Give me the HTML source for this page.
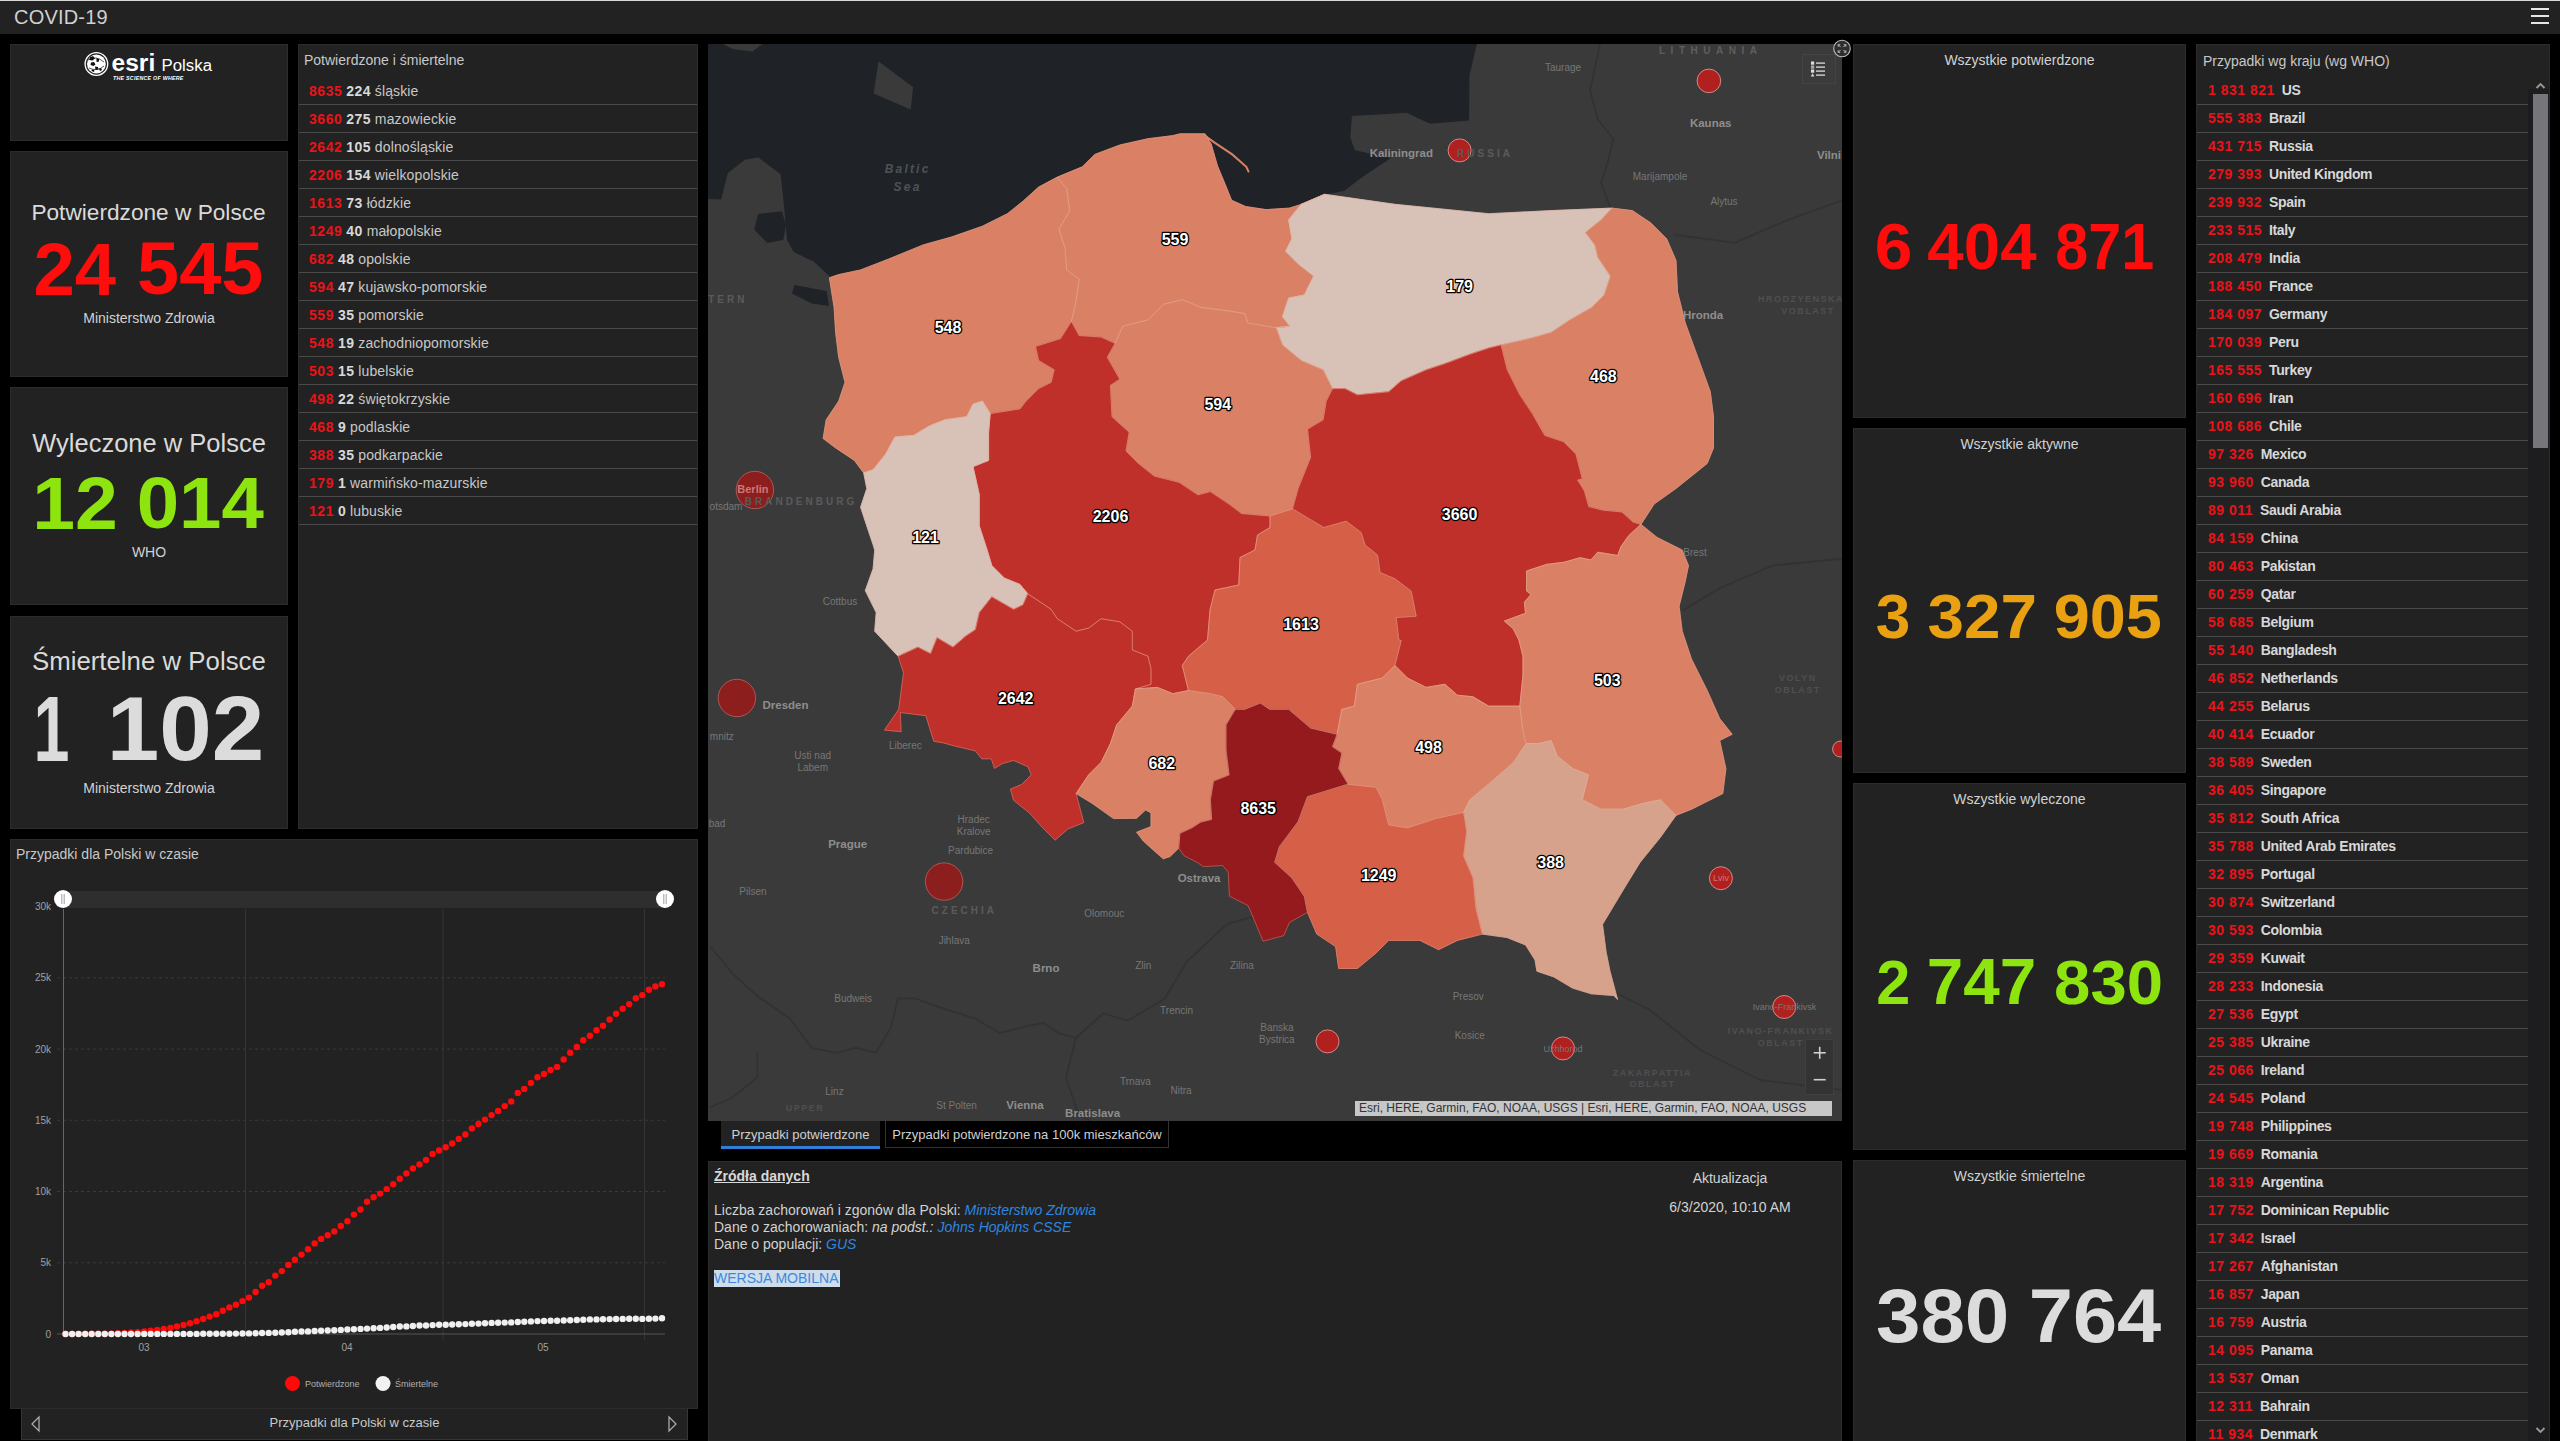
<!DOCTYPE html><html><head><meta charset="utf-8"><title>COVID-19</title><style>
*{margin:0;padding:0;box-sizing:border-box}
html,body{width:2560px;height:1441px;overflow:hidden;background:#000;font-family:"Liberation Sans", sans-serif;color:#c8c8c8}
.abs{position:absolute}
.panel{position:absolute;background:#222;border:1px solid #2c2c2c}
.t{position:absolute;white-space:nowrap;line-height:1}
.row{position:absolute;left:1px;height:28px;border-bottom:1px solid #4a4a4a;white-space:nowrap;font-size:14px;line-height:1}
.row span.n{color:#e8141a;font-weight:bold;letter-spacing:0.55px}
.row span.c{color:#e8141a;font-weight:bold;letter-spacing:0.5px}
.row span.cn{color:#d8d8d8;font-weight:bold;letter-spacing:-0.35px;margin-left:3px}
.row span.nm{letter-spacing:0.12px}
.row span.d{color:#d8d8d8;font-weight:bold;letter-spacing:0.45px}
</style></head><body>
<div class="abs" style="left:0;top:0;width:2560px;height:1px;background:#d8d8d8"></div>
<div class="abs" style="left:0;top:1px;width:2560px;height:33px;background:#222"></div>
<div class="t" style="left:14px;top:7px;font-size:20px;color:#d0d0d0;letter-spacing:0.2px">COVID-19</div>
<div class="abs" style="left:2531px;top:8px;width:18px;height:2px;background:#e6e6e6"></div>
<div class="abs" style="left:2531px;top:15px;width:18px;height:2px;background:#e6e6e6"></div>
<div class="abs" style="left:2531px;top:22px;width:18px;height:2px;background:#e6e6e6"></div>
<div class="panel" style="left:10px;top:44px;width:278px;height:97px"></div>
<svg class="abs" style="left:0;top:0" width="260" height="100" viewBox="0 0 260 100">
<circle cx="96.4" cy="64" r="11.3" fill="none" stroke="#fff" stroke-width="1.3"/>
<circle cx="96.4" cy="64" r="9.4" fill="#fff"/>
<g fill="#111">
<path d="M89.5 57.5 l3.5 -1.5 l2 2.5 l-2.5 2 l-3 -0.5 z"/>
<path d="M91 62.5 l3 -0.5 l1.5 2.5 l-2 1.5 l-3 -1 z"/>
<path d="M96.5 58 l2.5 1 l0 2.5 l-2.5 0.5 z"/>
<path d="M95 66.5 l3 0.5 l0.5 2.5 l-3 0.5 z"/>
<path d="M92 69.5 l2.5 0.5 l-0.5 2 l-2.5 -1 z"/>
<path d="M100 68 l2 1 l-1 2 l-2 -1 z"/>
</g>
<g stroke="#111" stroke-width="0.7" fill="none"><path d="M88 60 Q96 55 104 62"/><path d="M89 68 Q97 72 104 66"/></g>
</svg>
<div class="abs" style="left:0;top:0;transform-origin:0 0;transform:matrix(0.2455,0,0,0.2319,111.52,51.09);font-size:100px;line-height:1;font-weight:bold;color:#fff;white-space:nowrap">esri</div>
<div class="abs" style="left:0;top:0;transform-origin:0 0;transform:matrix(0.1682,0,0,0.1710,161.55,56.26);font-size:100px;line-height:1;font-weight:normal;color:#fff;white-space:nowrap">Polska</div>
<div class="abs" style="left:113px;top:75px;width:67px;height:6px;font-size:5.3px;line-height:6px;font-weight:bold;font-style:italic;color:#fff;white-space:nowrap;letter-spacing:0.25px">THE SCIENCE OF WHERE</div>
<div class="panel" style="left:10px;top:151px;width:278px;height:226px"></div>
<div class="abs" style="left:0;top:0;transform-origin:0 0;transform:matrix(0.2266,0,0,0.2290,31.39,200.54);font-size:100px;line-height:1;font-weight:normal;color:#dadada;white-space:nowrap">Potwierdzone w Polsce</div>
<div class="abs" style="left:0;top:0;transform-origin:0 0;transform:matrix(0.7435,0,0,0.7471,33.47,231.49);font-size:100px;line-height:1;font-weight:bold;color:#ff0d0d;white-space:nowrap">24</div>
<div class="abs" style="left:0;top:0;transform-origin:0 0;transform:matrix(0.7571,0,0,0.7471,137.03,230.75);font-size:100px;line-height:1;font-weight:bold;color:#ff0d0d;white-space:nowrap">545</div>
<div class="t" style="left:10px;width:278px;text-align:center;top:311px;font-size:14px;color:#d2d2d2">Ministerstwo Zdrowia</div>
<div class="panel" style="left:10px;top:387px;width:278px;height:218px"></div>
<div class="abs" style="left:0;top:0;transform-origin:0 0;transform:matrix(0.2550,0,0,0.2507,32.20,431.19);font-size:100px;line-height:1;font-weight:normal;color:#dadada;white-space:nowrap">Wyleczone w Polsce</div>
<div class="abs" style="left:0;top:0;transform-origin:0 0;transform:matrix(0.7693,0,0,0.7329,32.18,466.21);font-size:100px;line-height:1;font-weight:bold;color:#8de40e;white-space:nowrap">12</div>
<div class="abs" style="left:0;top:0;transform-origin:0 0;transform:matrix(0.7617,0,0,0.7225,136.75,466.36);font-size:100px;line-height:1;font-weight:bold;color:#8de40e;white-space:nowrap">014</div>
<div class="t" style="left:10px;width:278px;text-align:center;top:545px;font-size:14px;color:#d2d2d2">WHO</div>
<div class="panel" style="left:10px;top:616px;width:278px;height:213px"></div>
<div class="abs" style="left:0;top:0;transform-origin:0 0;transform:matrix(0.2582,0,0,0.2565,31.91,647.90);font-size:100px;line-height:1;font-weight:normal;color:#dadada;white-space:nowrap">Śmiertelne w Polsce</div>
<div class="abs" style="left:0;top:0;transform-origin:0 0;transform:matrix(0.6468,0,0,0.9341,33.42,681.86);font-size:100px;line-height:1;font-weight:bold;color:#dcdcdc;white-space:nowrap">1</div>
<div class="abs" style="left:0;top:0;transform-origin:0 0;transform:matrix(0.9446,0,0,0.9077,106.73,683.18);font-size:100px;line-height:1;font-weight:bold;color:#dcdcdc;white-space:nowrap">102</div>
<div class="t" style="left:10px;width:278px;text-align:center;top:781px;font-size:14px;color:#d2d2d2">Ministerstwo Zdrowia</div>
<div class="panel" style="left:298px;top:44px;width:400px;height:785px"></div>
<div class="t" style="left:304px;top:53px;font-size:14px;color:#c8c8c8">Potwierdzone i śmiertelne</div>
<div class="row" style="left:299px;top:77px;width:398px"><div class="t" style="left:10px;top:7px"><span class="n">8635</span> <span class="d">224</span> <span class="nm">śląskie</span></div></div>
<div class="row" style="left:299px;top:105px;width:398px"><div class="t" style="left:10px;top:7px"><span class="n">3660</span> <span class="d">275</span> <span class="nm">mazowieckie</span></div></div>
<div class="row" style="left:299px;top:133px;width:398px"><div class="t" style="left:10px;top:7px"><span class="n">2642</span> <span class="d">105</span> <span class="nm">dolnośląskie</span></div></div>
<div class="row" style="left:299px;top:161px;width:398px"><div class="t" style="left:10px;top:7px"><span class="n">2206</span> <span class="d">154</span> <span class="nm">wielkopolskie</span></div></div>
<div class="row" style="left:299px;top:189px;width:398px"><div class="t" style="left:10px;top:7px"><span class="n">1613</span> <span class="d">73</span> <span class="nm">łódzkie</span></div></div>
<div class="row" style="left:299px;top:217px;width:398px"><div class="t" style="left:10px;top:7px"><span class="n">1249</span> <span class="d">40</span> <span class="nm">małopolskie</span></div></div>
<div class="row" style="left:299px;top:245px;width:398px"><div class="t" style="left:10px;top:7px"><span class="n">682</span> <span class="d">48</span> <span class="nm">opolskie</span></div></div>
<div class="row" style="left:299px;top:273px;width:398px"><div class="t" style="left:10px;top:7px"><span class="n">594</span> <span class="d">47</span> <span class="nm">kujawsko-pomorskie</span></div></div>
<div class="row" style="left:299px;top:301px;width:398px"><div class="t" style="left:10px;top:7px"><span class="n">559</span> <span class="d">35</span> <span class="nm">pomorskie</span></div></div>
<div class="row" style="left:299px;top:329px;width:398px"><div class="t" style="left:10px;top:7px"><span class="n">548</span> <span class="d">19</span> <span class="nm">zachodniopomorskie</span></div></div>
<div class="row" style="left:299px;top:357px;width:398px"><div class="t" style="left:10px;top:7px"><span class="n">503</span> <span class="d">15</span> <span class="nm">lubelskie</span></div></div>
<div class="row" style="left:299px;top:385px;width:398px"><div class="t" style="left:10px;top:7px"><span class="n">498</span> <span class="d">22</span> <span class="nm">świętokrzyskie</span></div></div>
<div class="row" style="left:299px;top:413px;width:398px"><div class="t" style="left:10px;top:7px"><span class="n">468</span> <span class="d">9</span> <span class="nm">podlaskie</span></div></div>
<div class="row" style="left:299px;top:441px;width:398px"><div class="t" style="left:10px;top:7px"><span class="n">388</span> <span class="d">35</span> <span class="nm">podkarpackie</span></div></div>
<div class="row" style="left:299px;top:469px;width:398px"><div class="t" style="left:10px;top:7px"><span class="n">179</span> <span class="d">1</span> <span class="nm">warmińsko-mazurskie</span></div></div>
<div class="row" style="left:299px;top:497px;width:398px"><div class="t" style="left:10px;top:7px"><span class="n">121</span> <span class="d">0</span> <span class="nm">lubuskie</span></div></div>
<div class="panel" style="left:1853px;top:44px;width:333px;height:374px"></div>
<div class="t" style="left:1853px;width:333px;text-align:center;top:53px;font-size:14px;color:#d2d2d2">Wszystkie potwierdzone</div>
<div class="abs" style="left:0;top:0;transform-origin:0 0;transform:matrix(0.6771,0,0,0.6430,1874.79,214.11);font-size:100px;line-height:1;font-weight:bold;color:#ff0d0d;white-space:nowrap">6</div>
<div class="abs" style="left:0;top:0;transform-origin:0 0;transform:matrix(0.6545,0,0,0.6430,1927.35,214.11);font-size:100px;line-height:1;font-weight:bold;color:#ff0d0d;white-space:nowrap">404</div>
<div class="abs" style="left:0;top:0;transform-origin:0 0;transform:matrix(0.5932,0,0,0.6430,2055.22,214.11);font-size:100px;line-height:1;font-weight:bold;color:#ff0d0d;white-space:nowrap">871</div>
<div class="panel" style="left:1853px;top:428px;width:333px;height:345px"></div>
<div class="t" style="left:1853px;width:333px;text-align:center;top:437px;font-size:14px;color:#d2d2d2">Wszystkie aktywne</div>
<div class="abs" style="left:0;top:0;transform-origin:0 0;transform:matrix(0.6220,0,0,0.6338,1875.66,584.24);font-size:100px;line-height:1;font-weight:bold;color:#e9a112;white-space:nowrap">3</div>
<div class="abs" style="left:0;top:0;transform-origin:0 0;transform:matrix(0.6562,0,0,0.6338,1927.44,584.24);font-size:100px;line-height:1;font-weight:bold;color:#e9a112;white-space:nowrap">327</div>
<div class="abs" style="left:0;top:0;transform-origin:0 0;transform:matrix(0.6484,0,0,0.6338,2053.65,584.24);font-size:100px;line-height:1;font-weight:bold;color:#e9a112;white-space:nowrap">905</div>
<div class="panel" style="left:1853px;top:783px;width:333px;height:367px"></div>
<div class="t" style="left:1853px;width:333px;text-align:center;top:792px;font-size:14px;color:#d2d2d2">Wszystkie wyleczone</div>
<div class="abs" style="left:0;top:0;transform-origin:0 0;transform:matrix(0.6122,0,0,0.6343,1876.16,950.49);font-size:100px;line-height:1;font-weight:bold;color:#8de40e;white-space:nowrap">2</div>
<div class="abs" style="left:0;top:0;transform-origin:0 0;transform:matrix(0.6563,0,0,0.6435,1926.77,949.70);font-size:100px;line-height:1;font-weight:bold;color:#8de40e;white-space:nowrap">747</div>
<div class="abs" style="left:0;top:0;transform-origin:0 0;transform:matrix(0.6537,0,0,0.6254,2054.04,950.62);font-size:100px;line-height:1;font-weight:bold;color:#8de40e;white-space:nowrap">830</div>
<div class="panel" style="left:1853px;top:1160px;width:333px;height:290px"></div>
<div class="t" style="left:1853px;width:333px;text-align:center;top:1169px;font-size:14px;color:#d2d2d2">Wszystkie śmiertelne</div>
<div class="abs" style="left:0;top:0;transform-origin:0 0;transform:matrix(0.7997,0,0,0.7655,1875.90,1277.27);font-size:100px;line-height:1;font-weight:bold;color:#dcdcdc;white-space:nowrap">380</div>
<div class="abs" style="left:0;top:0;transform-origin:0 0;transform:matrix(0.7944,0,0,0.7655,2028.72,1277.27);font-size:100px;line-height:1;font-weight:bold;color:#dcdcdc;white-space:nowrap">764</div>
<div class="panel" style="left:2196px;top:44px;width:354px;height:1400px;overflow:hidden">
<div class="t" style="left:6px;top:9px;font-size:14px;color:#c8c8c8">Przypadki wg kraju (wg WHO)</div>
<div class="row" style="left:0;top:32px;width:336px"><div class="t" style="left:11px;top:6px"><span class="c">1 831 821</span> <span class="cn">US</span></div></div>
<div class="row" style="left:0;top:60px;width:336px"><div class="t" style="left:11px;top:6px"><span class="c">555 383</span> <span class="cn">Brazil</span></div></div>
<div class="row" style="left:0;top:88px;width:336px"><div class="t" style="left:11px;top:6px"><span class="c">431 715</span> <span class="cn">Russia</span></div></div>
<div class="row" style="left:0;top:116px;width:336px"><div class="t" style="left:11px;top:6px"><span class="c">279 393</span> <span class="cn">United Kingdom</span></div></div>
<div class="row" style="left:0;top:144px;width:336px"><div class="t" style="left:11px;top:6px"><span class="c">239 932</span> <span class="cn">Spain</span></div></div>
<div class="row" style="left:0;top:172px;width:336px"><div class="t" style="left:11px;top:6px"><span class="c">233 515</span> <span class="cn">Italy</span></div></div>
<div class="row" style="left:0;top:200px;width:336px"><div class="t" style="left:11px;top:6px"><span class="c">208 479</span> <span class="cn">India</span></div></div>
<div class="row" style="left:0;top:228px;width:336px"><div class="t" style="left:11px;top:6px"><span class="c">188 450</span> <span class="cn">France</span></div></div>
<div class="row" style="left:0;top:256px;width:336px"><div class="t" style="left:11px;top:6px"><span class="c">184 097</span> <span class="cn">Germany</span></div></div>
<div class="row" style="left:0;top:284px;width:336px"><div class="t" style="left:11px;top:6px"><span class="c">170 039</span> <span class="cn">Peru</span></div></div>
<div class="row" style="left:0;top:312px;width:336px"><div class="t" style="left:11px;top:6px"><span class="c">165 555</span> <span class="cn">Turkey</span></div></div>
<div class="row" style="left:0;top:340px;width:336px"><div class="t" style="left:11px;top:6px"><span class="c">160 696</span> <span class="cn">Iran</span></div></div>
<div class="row" style="left:0;top:368px;width:336px"><div class="t" style="left:11px;top:6px"><span class="c">108 686</span> <span class="cn">Chile</span></div></div>
<div class="row" style="left:0;top:396px;width:336px"><div class="t" style="left:11px;top:6px"><span class="c">97 326</span> <span class="cn">Mexico</span></div></div>
<div class="row" style="left:0;top:424px;width:336px"><div class="t" style="left:11px;top:6px"><span class="c">93 960</span> <span class="cn">Canada</span></div></div>
<div class="row" style="left:0;top:452px;width:336px"><div class="t" style="left:11px;top:6px"><span class="c">89 011</span> <span class="cn">Saudi Arabia</span></div></div>
<div class="row" style="left:0;top:480px;width:336px"><div class="t" style="left:11px;top:6px"><span class="c">84 159</span> <span class="cn">China</span></div></div>
<div class="row" style="left:0;top:508px;width:336px"><div class="t" style="left:11px;top:6px"><span class="c">80 463</span> <span class="cn">Pakistan</span></div></div>
<div class="row" style="left:0;top:536px;width:336px"><div class="t" style="left:11px;top:6px"><span class="c">60 259</span> <span class="cn">Qatar</span></div></div>
<div class="row" style="left:0;top:564px;width:336px"><div class="t" style="left:11px;top:6px"><span class="c">58 685</span> <span class="cn">Belgium</span></div></div>
<div class="row" style="left:0;top:592px;width:336px"><div class="t" style="left:11px;top:6px"><span class="c">55 140</span> <span class="cn">Bangladesh</span></div></div>
<div class="row" style="left:0;top:620px;width:336px"><div class="t" style="left:11px;top:6px"><span class="c">46 852</span> <span class="cn">Netherlands</span></div></div>
<div class="row" style="left:0;top:648px;width:336px"><div class="t" style="left:11px;top:6px"><span class="c">44 255</span> <span class="cn">Belarus</span></div></div>
<div class="row" style="left:0;top:676px;width:336px"><div class="t" style="left:11px;top:6px"><span class="c">40 414</span> <span class="cn">Ecuador</span></div></div>
<div class="row" style="left:0;top:704px;width:336px"><div class="t" style="left:11px;top:6px"><span class="c">38 589</span> <span class="cn">Sweden</span></div></div>
<div class="row" style="left:0;top:732px;width:336px"><div class="t" style="left:11px;top:6px"><span class="c">36 405</span> <span class="cn">Singapore</span></div></div>
<div class="row" style="left:0;top:760px;width:336px"><div class="t" style="left:11px;top:6px"><span class="c">35 812</span> <span class="cn">South Africa</span></div></div>
<div class="row" style="left:0;top:788px;width:336px"><div class="t" style="left:11px;top:6px"><span class="c">35 788</span> <span class="cn">United Arab Emirates</span></div></div>
<div class="row" style="left:0;top:816px;width:336px"><div class="t" style="left:11px;top:6px"><span class="c">32 895</span> <span class="cn">Portugal</span></div></div>
<div class="row" style="left:0;top:844px;width:336px"><div class="t" style="left:11px;top:6px"><span class="c">30 874</span> <span class="cn">Switzerland</span></div></div>
<div class="row" style="left:0;top:872px;width:336px"><div class="t" style="left:11px;top:6px"><span class="c">30 593</span> <span class="cn">Colombia</span></div></div>
<div class="row" style="left:0;top:900px;width:336px"><div class="t" style="left:11px;top:6px"><span class="c">29 359</span> <span class="cn">Kuwait</span></div></div>
<div class="row" style="left:0;top:928px;width:336px"><div class="t" style="left:11px;top:6px"><span class="c">28 233</span> <span class="cn">Indonesia</span></div></div>
<div class="row" style="left:0;top:956px;width:336px"><div class="t" style="left:11px;top:6px"><span class="c">27 536</span> <span class="cn">Egypt</span></div></div>
<div class="row" style="left:0;top:984px;width:336px"><div class="t" style="left:11px;top:6px"><span class="c">25 385</span> <span class="cn">Ukraine</span></div></div>
<div class="row" style="left:0;top:1012px;width:336px"><div class="t" style="left:11px;top:6px"><span class="c">25 066</span> <span class="cn">Ireland</span></div></div>
<div class="row" style="left:0;top:1040px;width:336px"><div class="t" style="left:11px;top:6px"><span class="c">24 545</span> <span class="cn">Poland</span></div></div>
<div class="row" style="left:0;top:1068px;width:336px"><div class="t" style="left:11px;top:6px"><span class="c">19 748</span> <span class="cn">Philippines</span></div></div>
<div class="row" style="left:0;top:1096px;width:336px"><div class="t" style="left:11px;top:6px"><span class="c">19 669</span> <span class="cn">Romania</span></div></div>
<div class="row" style="left:0;top:1124px;width:336px"><div class="t" style="left:11px;top:6px"><span class="c">18 319</span> <span class="cn">Argentina</span></div></div>
<div class="row" style="left:0;top:1152px;width:336px"><div class="t" style="left:11px;top:6px"><span class="c">17 752</span> <span class="cn">Dominican Republic</span></div></div>
<div class="row" style="left:0;top:1180px;width:336px"><div class="t" style="left:11px;top:6px"><span class="c">17 342</span> <span class="cn">Israel</span></div></div>
<div class="row" style="left:0;top:1208px;width:336px"><div class="t" style="left:11px;top:6px"><span class="c">17 267</span> <span class="cn">Afghanistan</span></div></div>
<div class="row" style="left:0;top:1236px;width:336px"><div class="t" style="left:11px;top:6px"><span class="c">16 857</span> <span class="cn">Japan</span></div></div>
<div class="row" style="left:0;top:1264px;width:336px"><div class="t" style="left:11px;top:6px"><span class="c">16 759</span> <span class="cn">Austria</span></div></div>
<div class="row" style="left:0;top:1292px;width:336px"><div class="t" style="left:11px;top:6px"><span class="c">14 095</span> <span class="cn">Panama</span></div></div>
<div class="row" style="left:0;top:1320px;width:336px"><div class="t" style="left:11px;top:6px"><span class="c">13 537</span> <span class="cn">Oman</span></div></div>
<div class="row" style="left:0;top:1348px;width:336px"><div class="t" style="left:11px;top:6px"><span class="c">12 311</span> <span class="cn">Bahrain</span></div></div>
<div class="row" style="left:0;top:1376px;width:336px"><div class="t" style="left:11px;top:6px"><span class="c">11 934</span> <span class="cn">Denmark</span></div></div>
<div class="abs" style="left:331px;top:44px;width:21px;height:1400px;background:#1d1d1f"></div>
<div class="abs" style="left:336px;top:49px;width:15px;height:354px;background:#76767a"></div>
<svg class="abs" style="left:336px;top:36px" width="15" height="10"><path d="M3.5 7 L7.5 3 L11.5 7" fill="none" stroke="#9a9a9a" stroke-width="1.8"/></svg>
<svg class="abs" style="left:336px;top:1380px" width="15" height="10"><path d="M3.5 3 L7.5 7 L11.5 3" fill="none" stroke="#9a9a9a" stroke-width="1.8"/></svg>
</div>
<div class="panel" style="left:10px;top:839px;width:688px;height:570px"></div>
<div class="t" style="left:16px;top:847px;font-size:14px;color:#c8c8c8">Przypadki dla Polski w czasie</div>
<svg class="abs" style="left:0;top:0" width="720" height="1441" viewBox="0 0 720 1441"><line x1="245.5" y1="909" x2="245.5" y2="1340" stroke="#353535" stroke-width="1"/><line x1="443.0" y1="909" x2="443.0" y2="1340" stroke="#353535" stroke-width="1"/><line x1="644.5" y1="909" x2="644.5" y2="1340" stroke="#353535" stroke-width="1"/><line x1="57" y1="1262.8" x2="665" y2="1262.8" stroke="#3a3a3a" stroke-width="1" stroke-dasharray="3,3"/><text x="51" y="1266.3" text-anchor="end" font-family="Liberation Sans" font-size="10" fill="#a0a0a0">5k</text><line x1="57" y1="1191.5" x2="665" y2="1191.5" stroke="#3a3a3a" stroke-width="1" stroke-dasharray="3,3"/><text x="51" y="1195.0" text-anchor="end" font-family="Liberation Sans" font-size="10" fill="#a0a0a0">10k</text><line x1="57" y1="1120.3" x2="665" y2="1120.3" stroke="#3a3a3a" stroke-width="1" stroke-dasharray="3,3"/><text x="51" y="1123.8" text-anchor="end" font-family="Liberation Sans" font-size="10" fill="#a0a0a0">15k</text><line x1="57" y1="1049.1" x2="665" y2="1049.1" stroke="#3a3a3a" stroke-width="1" stroke-dasharray="3,3"/><text x="51" y="1052.6" text-anchor="end" font-family="Liberation Sans" font-size="10" fill="#a0a0a0">20k</text><line x1="57" y1="977.8" x2="665" y2="977.8" stroke="#3a3a3a" stroke-width="1" stroke-dasharray="3,3"/><text x="51" y="981.3" text-anchor="end" font-family="Liberation Sans" font-size="10" fill="#a0a0a0">25k</text><line x1="57" y1="906.6" x2="665" y2="906.6" stroke="#3a3a3a" stroke-width="1" stroke-dasharray="3,3"/><text x="51" y="910.1" text-anchor="end" font-family="Liberation Sans" font-size="10" fill="#a0a0a0">30k</text><text x="51" y="1337.5" text-anchor="end" font-family="Liberation Sans" font-size="10" fill="#a0a0a0">0</text><line x1="57" y1="1334.0" x2="665" y2="1334.0" stroke="#555" stroke-width="1"/><line x1="63.5" y1="909" x2="63.5" y2="1334.0" stroke="#666" stroke-width="1"/><text x="144" y="1351" text-anchor="middle" font-family="Liberation Sans" font-size="10" fill="#a0a0a0">03</text><text x="347" y="1351" text-anchor="middle" font-family="Liberation Sans" font-size="10" fill="#a0a0a0">04</text><text x="543" y="1351" text-anchor="middle" font-family="Liberation Sans" font-size="10" fill="#a0a0a0">05</text><rect x="63" y="891" width="602" height="17" fill="#2e2e2e"/><circle cx="63" cy="899" r="9" fill="#fff"/><line x1="61.8" y1="894" x2="61.8" y2="904" stroke="#888" stroke-width="0.8"/><line x1="64.2" y1="894" x2="64.2" y2="904" stroke="#888" stroke-width="0.8"/><circle cx="665" cy="899" r="9" fill="#fff"/><line x1="663.8" y1="894" x2="663.8" y2="904" stroke="#888" stroke-width="0.8"/><line x1="666.2" y1="894" x2="666.2" y2="904" stroke="#888" stroke-width="0.8"/><circle cx="65.5" cy="1334.0" r="3.2" fill="#ff0a0a"/><circle cx="72.1" cy="1334.0" r="3.2" fill="#ff0a0a"/><circle cx="78.6" cy="1333.9" r="3.2" fill="#ff0a0a"/><circle cx="85.2" cy="1333.9" r="3.2" fill="#ff0a0a"/><circle cx="91.7" cy="1333.8" r="3.2" fill="#ff0a0a"/><circle cx="98.3" cy="1333.8" r="3.2" fill="#ff0a0a"/><circle cx="104.8" cy="1333.7" r="3.2" fill="#ff0a0a"/><circle cx="111.4" cy="1333.6" r="3.2" fill="#ff0a0a"/><circle cx="117.9" cy="1333.3" r="3.2" fill="#ff0a0a"/><circle cx="124.5" cy="1333.0" r="3.2" fill="#ff0a0a"/><circle cx="131.0" cy="1332.5" r="3.2" fill="#ff0a0a"/><circle cx="137.6" cy="1332.2" r="3.2" fill="#ff0a0a"/><circle cx="144.2" cy="1331.5" r="3.2" fill="#ff0a0a"/><circle cx="150.7" cy="1330.6" r="3.2" fill="#ff0a0a"/><circle cx="157.3" cy="1329.9" r="3.2" fill="#ff0a0a"/><circle cx="163.8" cy="1328.9" r="3.2" fill="#ff0a0a"/><circle cx="170.4" cy="1327.9" r="3.2" fill="#ff0a0a"/><circle cx="176.9" cy="1326.4" r="3.2" fill="#ff0a0a"/><circle cx="183.5" cy="1325.0" r="3.2" fill="#ff0a0a"/><circle cx="190.0" cy="1323.3" r="3.2" fill="#ff0a0a"/><circle cx="196.6" cy="1321.2" r="3.2" fill="#ff0a0a"/><circle cx="203.2" cy="1319.0" r="3.2" fill="#ff0a0a"/><circle cx="209.7" cy="1316.6" r="3.2" fill="#ff0a0a"/><circle cx="216.3" cy="1314.2" r="3.2" fill="#ff0a0a"/><circle cx="222.8" cy="1310.7" r="3.2" fill="#ff0a0a"/><circle cx="229.4" cy="1307.5" r="3.2" fill="#ff0a0a"/><circle cx="235.9" cy="1304.7" r="3.2" fill="#ff0a0a"/><circle cx="242.5" cy="1301.1" r="3.2" fill="#ff0a0a"/><circle cx="249.0" cy="1297.6" r="3.2" fill="#ff0a0a"/><circle cx="255.6" cy="1292.0" r="3.2" fill="#ff0a0a"/><circle cx="262.1" cy="1285.8" r="3.2" fill="#ff0a0a"/><circle cx="268.7" cy="1282.3" r="3.2" fill="#ff0a0a"/><circle cx="275.3" cy="1275.6" r="3.2" fill="#ff0a0a"/><circle cx="281.8" cy="1271.1" r="3.2" fill="#ff0a0a"/><circle cx="288.4" cy="1264.9" r="3.2" fill="#ff0a0a"/><circle cx="294.9" cy="1259.8" r="3.2" fill="#ff0a0a"/><circle cx="301.5" cy="1254.6" r="3.2" fill="#ff0a0a"/><circle cx="308.0" cy="1249.2" r="3.2" fill="#ff0a0a"/><circle cx="314.6" cy="1243.4" r="3.2" fill="#ff0a0a"/><circle cx="321.1" cy="1238.9" r="3.2" fill="#ff0a0a"/><circle cx="327.7" cy="1235.2" r="3.2" fill="#ff0a0a"/><circle cx="334.3" cy="1231.4" r="3.2" fill="#ff0a0a"/><circle cx="340.8" cy="1226.0" r="3.2" fill="#ff0a0a"/><circle cx="347.4" cy="1221.2" r="3.2" fill="#ff0a0a"/><circle cx="353.9" cy="1214.6" r="3.2" fill="#ff0a0a"/><circle cx="360.5" cy="1209.5" r="3.2" fill="#ff0a0a"/><circle cx="367.0" cy="1201.7" r="3.2" fill="#ff0a0a"/><circle cx="373.6" cy="1197.3" r="3.2" fill="#ff0a0a"/><circle cx="380.1" cy="1193.6" r="3.2" fill="#ff0a0a"/><circle cx="386.7" cy="1189.1" r="3.2" fill="#ff0a0a"/><circle cx="393.2" cy="1184.3" r="3.2" fill="#ff0a0a"/><circle cx="399.8" cy="1178.8" r="3.2" fill="#ff0a0a"/><circle cx="406.4" cy="1173.4" r="3.2" fill="#ff0a0a"/><circle cx="412.9" cy="1168.5" r="3.2" fill="#ff0a0a"/><circle cx="419.5" cy="1164.4" r="3.2" fill="#ff0a0a"/><circle cx="426.0" cy="1159.9" r="3.2" fill="#ff0a0a"/><circle cx="432.6" cy="1153.9" r="3.2" fill="#ff0a0a"/><circle cx="439.1" cy="1150.5" r="3.2" fill="#ff0a0a"/><circle cx="445.7" cy="1147.3" r="3.2" fill="#ff0a0a"/><circle cx="452.2" cy="1143.5" r="3.2" fill="#ff0a0a"/><circle cx="458.8" cy="1138.9" r="3.2" fill="#ff0a0a"/><circle cx="465.4" cy="1134.5" r="3.2" fill="#ff0a0a"/><circle cx="471.9" cy="1128.4" r="3.2" fill="#ff0a0a"/><circle cx="478.5" cy="1124.0" r="3.2" fill="#ff0a0a"/><circle cx="485.0" cy="1119.6" r="3.2" fill="#ff0a0a"/><circle cx="491.6" cy="1115.1" r="3.2" fill="#ff0a0a"/><circle cx="498.1" cy="1111.0" r="3.2" fill="#ff0a0a"/><circle cx="504.7" cy="1106.1" r="3.2" fill="#ff0a0a"/><circle cx="511.2" cy="1101.4" r="3.2" fill="#ff0a0a"/><circle cx="517.8" cy="1092.9" r="3.2" fill="#ff0a0a"/><circle cx="524.3" cy="1088.9" r="3.2" fill="#ff0a0a"/><circle cx="530.9" cy="1083.0" r="3.2" fill="#ff0a0a"/><circle cx="537.5" cy="1077.3" r="3.2" fill="#ff0a0a"/><circle cx="544.0" cy="1073.9" r="3.2" fill="#ff0a0a"/><circle cx="550.6" cy="1070.0" r="3.2" fill="#ff0a0a"/><circle cx="557.1" cy="1066.9" r="3.2" fill="#ff0a0a"/><circle cx="563.7" cy="1059.5" r="3.2" fill="#ff0a0a"/><circle cx="570.2" cy="1052.8" r="3.2" fill="#ff0a0a"/><circle cx="576.8" cy="1047.0" r="3.2" fill="#ff0a0a"/><circle cx="583.3" cy="1040.2" r="3.2" fill="#ff0a0a"/><circle cx="589.9" cy="1035.8" r="3.2" fill="#ff0a0a"/><circle cx="596.5" cy="1030.2" r="3.2" fill="#ff0a0a"/><circle cx="603.0" cy="1025.8" r="3.2" fill="#ff0a0a"/><circle cx="609.6" cy="1019.5" r="3.2" fill="#ff0a0a"/><circle cx="616.1" cy="1013.8" r="3.2" fill="#ff0a0a"/><circle cx="622.7" cy="1008.8" r="3.2" fill="#ff0a0a"/><circle cx="629.2" cy="1004.1" r="3.2" fill="#ff0a0a"/><circle cx="635.8" cy="998.2" r="3.2" fill="#ff0a0a"/><circle cx="642.3" cy="995.1" r="3.2" fill="#ff0a0a"/><circle cx="648.9" cy="989.7" r="3.2" fill="#ff0a0a"/><circle cx="655.4" cy="986.5" r="3.2" fill="#ff0a0a"/><circle cx="662.0" cy="984.3" r="3.2" fill="#ff0a0a"/><circle cx="65.5" cy="1334.0" r="3.2" fill="#f0f0f0"/><circle cx="72.1" cy="1334.0" r="3.2" fill="#f0f0f0"/><circle cx="78.6" cy="1334.0" r="3.2" fill="#f0f0f0"/><circle cx="85.2" cy="1334.0" r="3.2" fill="#f0f0f0"/><circle cx="91.7" cy="1334.0" r="3.2" fill="#f0f0f0"/><circle cx="98.3" cy="1334.0" r="3.2" fill="#f0f0f0"/><circle cx="104.8" cy="1334.0" r="3.2" fill="#f0f0f0"/><circle cx="111.4" cy="1334.0" r="3.2" fill="#f0f0f0"/><circle cx="117.9" cy="1334.0" r="3.2" fill="#f0f0f0"/><circle cx="124.5" cy="1334.0" r="3.2" fill="#f0f0f0"/><circle cx="131.0" cy="1334.0" r="3.2" fill="#f0f0f0"/><circle cx="137.6" cy="1334.0" r="3.2" fill="#f0f0f0"/><circle cx="144.2" cy="1333.9" r="3.2" fill="#f0f0f0"/><circle cx="150.7" cy="1333.9" r="3.2" fill="#f0f0f0"/><circle cx="157.3" cy="1333.9" r="3.2" fill="#f0f0f0"/><circle cx="163.8" cy="1333.9" r="3.2" fill="#f0f0f0"/><circle cx="170.4" cy="1333.9" r="3.2" fill="#f0f0f0"/><circle cx="176.9" cy="1333.9" r="3.2" fill="#f0f0f0"/><circle cx="183.5" cy="1333.9" r="3.2" fill="#f0f0f0"/><circle cx="190.0" cy="1333.9" r="3.2" fill="#f0f0f0"/><circle cx="196.6" cy="1333.9" r="3.2" fill="#f0f0f0"/><circle cx="203.2" cy="1333.8" r="3.2" fill="#f0f0f0"/><circle cx="209.7" cy="1333.8" r="3.2" fill="#f0f0f0"/><circle cx="216.3" cy="1333.7" r="3.2" fill="#f0f0f0"/><circle cx="222.8" cy="1333.7" r="3.2" fill="#f0f0f0"/><circle cx="229.4" cy="1333.7" r="3.2" fill="#f0f0f0"/><circle cx="235.9" cy="1333.6" r="3.2" fill="#f0f0f0"/><circle cx="242.5" cy="1333.5" r="3.2" fill="#f0f0f0"/><circle cx="249.0" cy="1333.4" r="3.2" fill="#f0f0f0"/><circle cx="255.6" cy="1333.2" r="3.2" fill="#f0f0f0"/><circle cx="262.1" cy="1333.0" r="3.2" fill="#f0f0f0"/><circle cx="268.7" cy="1332.9" r="3.2" fill="#f0f0f0"/><circle cx="275.3" cy="1332.7" r="3.2" fill="#f0f0f0"/><circle cx="281.8" cy="1332.5" r="3.2" fill="#f0f0f0"/><circle cx="288.4" cy="1332.2" r="3.2" fill="#f0f0f0"/><circle cx="294.9" cy="1331.7" r="3.2" fill="#f0f0f0"/><circle cx="301.5" cy="1331.5" r="3.2" fill="#f0f0f0"/><circle cx="308.0" cy="1331.4" r="3.2" fill="#f0f0f0"/><circle cx="314.6" cy="1331.0" r="3.2" fill="#f0f0f0"/><circle cx="321.1" cy="1330.7" r="3.2" fill="#f0f0f0"/><circle cx="327.7" cy="1330.5" r="3.2" fill="#f0f0f0"/><circle cx="334.3" cy="1330.3" r="3.2" fill="#f0f0f0"/><circle cx="340.8" cy="1329.9" r="3.2" fill="#f0f0f0"/><circle cx="347.4" cy="1329.5" r="3.2" fill="#f0f0f0"/><circle cx="353.9" cy="1329.3" r="3.2" fill="#f0f0f0"/><circle cx="360.5" cy="1328.9" r="3.2" fill="#f0f0f0"/><circle cx="367.0" cy="1328.6" r="3.2" fill="#f0f0f0"/><circle cx="373.6" cy="1328.3" r="3.2" fill="#f0f0f0"/><circle cx="380.1" cy="1327.9" r="3.2" fill="#f0f0f0"/><circle cx="386.7" cy="1327.5" r="3.2" fill="#f0f0f0"/><circle cx="393.2" cy="1327.0" r="3.2" fill="#f0f0f0"/><circle cx="399.8" cy="1326.5" r="3.2" fill="#f0f0f0"/><circle cx="406.4" cy="1326.4" r="3.2" fill="#f0f0f0"/><circle cx="412.9" cy="1326.0" r="3.2" fill="#f0f0f0"/><circle cx="419.5" cy="1325.5" r="3.2" fill="#f0f0f0"/><circle cx="426.0" cy="1325.5" r="3.2" fill="#f0f0f0"/><circle cx="432.6" cy="1325.1" r="3.2" fill="#f0f0f0"/><circle cx="439.1" cy="1324.8" r="3.2" fill="#f0f0f0"/><circle cx="445.7" cy="1324.7" r="3.2" fill="#f0f0f0"/><circle cx="452.2" cy="1324.5" r="3.2" fill="#f0f0f0"/><circle cx="458.8" cy="1324.3" r="3.2" fill="#f0f0f0"/><circle cx="465.4" cy="1324.1" r="3.2" fill="#f0f0f0"/><circle cx="471.9" cy="1323.8" r="3.2" fill="#f0f0f0"/><circle cx="478.5" cy="1323.6" r="3.2" fill="#f0f0f0"/><circle cx="485.0" cy="1323.2" r="3.2" fill="#f0f0f0"/><circle cx="491.6" cy="1322.9" r="3.2" fill="#f0f0f0"/><circle cx="498.1" cy="1322.8" r="3.2" fill="#f0f0f0"/><circle cx="504.7" cy="1322.6" r="3.2" fill="#f0f0f0"/><circle cx="511.2" cy="1322.4" r="3.2" fill="#f0f0f0"/><circle cx="517.8" cy="1322.0" r="3.2" fill="#f0f0f0"/><circle cx="524.3" cy="1321.7" r="3.2" fill="#f0f0f0"/><circle cx="530.9" cy="1321.4" r="3.2" fill="#f0f0f0"/><circle cx="537.5" cy="1321.1" r="3.2" fill="#f0f0f0"/><circle cx="544.0" cy="1321.0" r="3.2" fill="#f0f0f0"/><circle cx="550.6" cy="1320.8" r="3.2" fill="#f0f0f0"/><circle cx="557.1" cy="1320.7" r="3.2" fill="#f0f0f0"/><circle cx="563.7" cy="1320.5" r="3.2" fill="#f0f0f0"/><circle cx="570.2" cy="1320.3" r="3.2" fill="#f0f0f0"/><circle cx="576.8" cy="1320.0" r="3.2" fill="#f0f0f0"/><circle cx="583.3" cy="1319.7" r="3.2" fill="#f0f0f0"/><circle cx="589.9" cy="1319.4" r="3.2" fill="#f0f0f0"/><circle cx="596.5" cy="1319.4" r="3.2" fill="#f0f0f0"/><circle cx="603.0" cy="1319.2" r="3.2" fill="#f0f0f0"/><circle cx="609.6" cy="1319.1" r="3.2" fill="#f0f0f0"/><circle cx="616.1" cy="1319.0" r="3.2" fill="#f0f0f0"/><circle cx="622.7" cy="1318.9" r="3.2" fill="#f0f0f0"/><circle cx="629.2" cy="1318.8" r="3.2" fill="#f0f0f0"/><circle cx="635.8" cy="1318.7" r="3.2" fill="#f0f0f0"/><circle cx="642.3" cy="1318.9" r="3.2" fill="#f0f0f0"/><circle cx="648.9" cy="1318.7" r="3.2" fill="#f0f0f0"/><circle cx="655.4" cy="1318.6" r="3.2" fill="#f0f0f0"/><circle cx="662.0" cy="1318.3" r="3.2" fill="#f0f0f0"/><circle cx="292.5" cy="1383.5" r="7.5" fill="#ff0a0a"/><text x="305" y="1387" font-family="Liberation Sans" font-size="9" fill="#b0b0b0">Potwierdzone</text><circle cx="383" cy="1383.5" r="7.5" fill="#f2f2f2"/><text x="395" y="1387" font-family="Liberation Sans" font-size="9" fill="#b0b0b0">Śmiertelne</text></svg>
<div class="abs" style="left:21px;top:1409px;width:667px;height:31px;background:#222;border:1px solid #363636;border-top:none"></div>
<div class="t" style="left:21px;width:667px;text-align:center;top:1416px;font-size:13px;color:#c8c8c8">Przypadki dla Polski w czasie</div>
<svg class="abs" style="left:28px;top:1414px" width="16" height="20"><path d="M11 3 L4 10 L11 17 Z" fill="none" stroke="#aaa" stroke-width="1.3"/></svg>
<svg class="abs" style="left:664px;top:1414px" width="16" height="20"><path d="M5 3 L12 10 L5 17 Z" fill="none" stroke="#aaa" stroke-width="1.3"/></svg>
<div class="abs" style="left:708px;top:44px;width:1134px;height:1077px;overflow:hidden;background:#3a3a3a"><svg width="1134" height="1077" viewBox="708 44 1134 1077" style="position:absolute;left:0;top:0"><polygon points="708.0,44.0 1476.9,44.0 1469.5,75.0 1469.0,120.6 1430.0,123.7 1406.6,112.8 1383.0,114.3 1351.9,115.9 1350.3,137.8 1355.0,150.2 1391.0,158.0 1362.8,176.8 1344.0,190.9 1323.8,194.8 1309.7,201.8 1289.4,208.1 1265.9,209.6 1245.6,206.5 1231.6,200.2 1225.3,184.6 1217.5,165.9 1211.2,144.0 1205.0,133.8 1180.0,133.8 1172.9,135.6 1147.9,138.7 1119.8,145.0 1094.8,154.4 1082.3,166.8 1057.3,177.1 1038.6,187.1 1023.0,201.2 1007.4,213.7 982.4,226.2 951.2,237.1 923.1,244.9 888.7,259.0 860.6,269.9 838.7,274.6 829.4,277.7 829.4,275.9 813.5,261.4 793.7,252.1 787.1,240.3 784.5,211.2 780.6,174.3 758.1,157.2 745.0,159.8 727.8,173.0 721.2,199.4 708.0,199.0" fill="#1f2327"/><polygon points="878.5,61.3 913.1,87.2 910.6,109.5 873.6,93.4" fill="#3a3a3a"/><polygon points="722.8,44.0 762.4,44.0 752.5,51.4 732.7,49.0" fill="#3a3a3a"/><polygon points="794.5,285.0 826.6,291.0 829.0,306.0 811.8,303.5 792.0,293.6" fill="#1f2327"/><polygon points="758.1,213.9 781.9,211.2 786.0,225.0 783.2,240.0 767.4,242.9 754.2,229.7" fill="#1f2327"/><polyline points="710.5,946.7 732.7,973.8 757.4,996.0 789.5,1018.3 811.7,1047.9 836.4,1052.8 856.1,1047.9 875.9,1052.8 890.7,1028.1 898.1,998.5 915.4,998.5 942.6,1008.4 974.7,1018.3 999.4,1033.1 1029.0,1025.7 1043.8,1023.2 1058.6,1033.1 1075.9,1038.0 1103.0,1013.3 1127.8,1020.7 1164.8,998.5 1187.0,961.5 1226.5,924.4 1251.2,917.0 1266.0,930.0" fill="none" stroke="#323232" stroke-width="1.8" stroke-linejoin="round"/><polyline points="1075.9,1038.0 1066.0,1077.5 1078.4,1114.6 1090.0,1121.0" fill="none" stroke="#323232" stroke-width="1.8" stroke-linejoin="round"/><polyline points="757.4,1052.8 757.4,1077.5 732.7,1097.3 710.5,1107.2" fill="none" stroke="#323232" stroke-width="1.8" stroke-linejoin="round"/><polyline points="1675.0,235.0 1735.0,242.7 1787.7,220.0 1850.0,197.7" fill="none" stroke="#323232" stroke-width="1.8" stroke-linejoin="round"/><polyline points="1682.6,610.6 1720.0,588.0 1772.7,565.5 1850.0,558.0" fill="none" stroke="#323232" stroke-width="1.8" stroke-linejoin="round"/><polyline points="1598.0,120.0 1613.5,138.7 1607.3,163.7 1601.0,182.5 1610.4,208.0" fill="none" stroke="#323232" stroke-width="1.8" stroke-linejoin="round"/><polyline points="1598.0,120.0 1590.0,90.0 1600.0,44.0" fill="none" stroke="#323232" stroke-width="1.8" stroke-linejoin="round"/><polyline points="1616.0,993.0 1650.0,1010.0 1700.0,1050.0 1760.0,1080.0 1842.0,1090.0" fill="none" stroke="#323232" stroke-width="1.8" stroke-linejoin="round"/><polygon points="829.4,277.7 838.7,274.6 860.6,269.9 888.7,259.0 923.1,244.9 951.2,237.1 982.4,226.2 1007.4,213.7 1023.0,201.2 1038.6,187.1 1057.3,177.1 1066.7,188.7 1069.8,210.6 1058.9,229.3 1065.1,248.0 1066.7,269.9 1079.2,279.3 1076.1,301.1 1071.4,321.4 1060.5,338.6 1035.5,346.4 1038.6,360.5 1054.2,369.8 1051.1,382.3 1038.6,388.6 1026.1,401.1 1019.9,408.9 990.2,413.6 982.4,401.1 973.0,404.2 966.8,416.7 944.9,419.8 929.3,426.0 913.7,435.4 895.0,437.0 885.6,454.2 873.1,469.8 863.7,472.9 854.4,460.4 835.6,447.9 823.1,438.5 826.2,419.8 838.7,401.1 845.0,382.3 838.7,357.3 835.6,332.4 834.1,307.4 829.4,277.7" fill="#d98065" stroke="#d98065" stroke-width="0.8" stroke-linejoin="round"/><polygon points="1057.3,177.1 1082.3,166.8 1094.8,154.4 1119.8,145.0 1147.9,138.7 1172.9,135.6 1180.0,133.8 1205.0,133.8 1211.2,144.0 1217.5,165.9 1225.3,184.6 1231.6,200.2 1245.6,206.5 1265.9,209.6 1289.4,208.1 1309.7,201.8 1324.7,194.3 1301.2,204.3 1288.7,219.9 1291.9,238.7 1285.6,251.2 1298.1,263.7 1313.7,276.1 1304.4,294.9 1288.7,298.0 1282.5,316.7 1290.0,326.1 1275.9,327.7 1247.8,323.0 1244.7,313.6 1226.0,310.5 1201.0,307.4 1182.3,299.6 1163.5,304.3 1147.9,319.9 1122.9,326.1 1115.1,343.3 1101.1,337.0 1079.2,335.5 1071.4,321.4 1076.1,301.1 1079.2,279.3 1066.7,269.9 1065.1,248.0 1058.9,229.3 1069.8,210.6 1066.7,188.7 1057.3,177.1" fill="#d98065" stroke="#d98065" stroke-width="0.8" stroke-linejoin="round"/><polygon points="1324.7,194.3 1394.9,204.3 1488.6,213.7 1551.1,210.6 1612.0,208.1 1601.0,219.9 1585.4,232.4 1594.8,244.9 1597.9,257.4 1610.4,276.1 1604.2,294.9 1591.7,307.4 1569.8,319.9 1551.1,332.4 1529.2,338.6 1501.1,344.9 1488.6,348.0 1469.9,354.2 1444.9,363.6 1426.1,369.8 1401.2,380.8 1388.7,391.7 1357.4,394.8 1345.0,388.6 1332.5,388.6 1323.1,369.8 1301.2,360.5 1282.5,344.9 1276.2,327.7 1290.0,326.1 1282.5,316.7 1288.7,298.0 1304.4,294.9 1313.7,276.1 1298.1,263.7 1285.6,251.2 1291.9,238.7 1288.7,219.9 1301.2,204.3 1324.7,194.3" fill="#d8c2b8" stroke="#d8c2b8" stroke-width="0.8" stroke-linejoin="round"/><polygon points="1612.0,208.1 1632.3,210.6 1651.0,223.1 1666.6,238.7 1676.0,260.5 1677.5,291.8 1685.3,323.0 1697.8,357.3 1710.3,391.7 1713.5,416.7 1713.5,447.9 1707.2,463.5 1676.0,488.5 1654.1,504.1 1641.0,524.4 1633.0,522.0 1622.0,512.0 1602.2,510.0 1588.8,506.6 1584.4,491.0 1577.7,480.0 1582.3,479.1 1576.0,454.2 1563.6,441.7 1544.8,435.4 1532.3,413.6 1519.8,394.8 1507.3,369.8 1501.1,344.9 1529.2,338.6 1551.1,332.4 1569.8,319.9 1591.7,307.4 1604.2,294.9 1610.4,276.1 1597.9,257.4 1594.8,244.9 1585.4,232.4 1601.0,219.9 1612.0,208.1" fill="#d98065" stroke="#d98065" stroke-width="0.8" stroke-linejoin="round"/><polygon points="1115.1,343.3 1122.9,326.1 1147.9,319.9 1163.5,304.3 1182.3,299.6 1201.0,307.4 1226.0,310.5 1244.7,313.6 1247.8,323.0 1275.9,327.7 1290.0,326.1 1276.2,327.7 1282.5,344.9 1301.2,360.5 1323.1,369.8 1332.5,388.6 1326.2,401.1 1323.1,419.8 1307.5,429.2 1310.6,457.3 1298.1,488.5 1292.5,508.8 1270.0,516.0 1241.6,513.5 1229.1,504.1 1210.4,491.6 1197.9,494.8 1179.1,482.3 1154.2,476.0 1138.5,463.5 1126.0,451.0 1129.2,432.3 1112.0,416.7 1110.4,385.4 1119.8,379.2 1107.3,357.3 1115.1,343.3" fill="#d98065" stroke="#d98065" stroke-width="0.8" stroke-linejoin="round"/><polygon points="1071.4,321.4 1079.2,335.5 1101.1,337.0 1115.1,343.3 1107.3,357.3 1119.8,379.2 1110.4,385.4 1112.0,416.7 1129.2,432.3 1126.0,451.0 1138.5,463.5 1154.2,476.0 1179.1,482.3 1197.9,494.8 1210.4,491.6 1229.1,504.1 1241.6,513.5 1270.0,516.0 1270.0,527.5 1257.5,535.0 1255.0,550.0 1240.0,557.5 1238.8,585.0 1215.0,590.0 1210.0,610.0 1207.5,640.0 1188.5,656.2 1182.3,665.5 1188.5,690.5 1172.9,693.7 1157.3,687.4 1135.4,689.0 1151.0,684.3 1151.0,668.7 1147.9,656.2 1132.3,649.9 1132.3,631.2 1119.8,621.8 1101.1,618.7 1088.6,628.1 1076.1,631.2 1057.3,618.7 1051.1,609.3 1027.7,593.7 1019.9,584.4 1004.3,578.1 991.8,565.6 987.1,550.0 979.3,526.0 979.3,494.8 973.0,466.6 988.6,460.4 988.6,432.3 990.2,413.6 1019.9,408.9 1026.1,401.1 1038.6,388.6 1051.1,382.3 1054.2,369.8 1038.6,360.5 1035.5,346.4 1060.5,338.6 1071.4,321.4" fill="#c0302a" stroke="#c0302a" stroke-width="0.8" stroke-linejoin="round"/><polygon points="990.2,413.6 988.6,432.3 988.6,460.4 973.0,466.6 979.3,494.8 979.3,526.0 987.1,550.0 991.8,565.6 1004.3,578.1 1019.9,584.4 1027.7,593.7 1023.0,604.7 1013.6,609.3 991.8,596.8 979.3,612.5 975.3,629.6 965.7,636.0 953.0,647.1 937.0,637.6 930.6,653.5 917.9,647.1 898.1,656.2 874.7,631.2 876.2,612.5 865.3,590.6 873.1,568.7 874.7,550.0 873.1,544.7 866.8,526.0 860.6,507.2 866.8,488.5 863.7,472.9 873.1,469.8 885.6,454.2 895.0,437.0 913.7,435.4 929.3,426.0 944.9,419.8 966.8,416.7 973.0,404.2 982.4,401.1 990.2,413.6" fill="#d8c2b8" stroke="#d8c2b8" stroke-width="0.8" stroke-linejoin="round"/><polygon points="898.1,656.2 917.9,647.1 930.6,653.5 937.0,637.6 953.0,647.1 965.7,636.0 975.3,629.6 979.3,612.5 991.8,596.8 1013.6,609.3 1023.0,604.7 1027.7,593.7 1051.1,609.3 1057.3,618.7 1076.1,631.2 1088.6,628.1 1101.1,618.7 1119.8,621.8 1132.3,631.2 1132.3,649.9 1147.9,656.2 1151.0,668.7 1151.0,684.3 1135.4,689.0 1132.3,706.1 1116.7,724.9 1110.4,743.6 1101.1,762.4 1088.6,774.9 1076.1,793.6 1083.8,822.6 1067.9,829.0 1055.1,840.2 1042.3,827.4 1029.6,813.1 1013.6,800.3 1010.4,789.1 1021.6,784.4 1031.2,774.8 1028.0,766.8 1013.6,760.4 1002.4,763.6 994.5,768.4 991.3,758.8 981.7,758.8 975.3,750.8 954.6,746.0 943.4,742.9 933.8,741.3 925.8,715.7 900.3,712.5 901.1,731.7 884.4,730.1 898.7,709.4 903.5,672.7 898.1,656.2" fill="#c0302a" stroke="#c0302a" stroke-width="0.8" stroke-linejoin="round"/><polygon points="1135.4,689.0 1157.3,687.4 1172.9,693.7 1188.5,690.5 1210.4,693.7 1222.9,696.8 1235.3,709.3 1226.0,724.9 1226.0,749.9 1229.1,774.9 1213.5,781.1 1210.4,799.8 1211.6,819.4 1200.5,822.2 1192.1,827.7 1179.9,833.3 1178.8,848.0 1170.0,856.6 1163.3,858.8 1153.3,850.0 1143.3,841.0 1136.6,832.2 1151.0,826.6 1151.0,812.8 1145.5,810.0 1136.6,818.3 1113.6,818.6 1091.7,803.0 1076.1,793.6 1088.6,774.9 1101.1,762.4 1110.4,743.6 1116.7,724.9 1132.3,706.1 1135.4,689.0" fill="#d98065" stroke="#d98065" stroke-width="0.8" stroke-linejoin="round"/><polygon points="1270.0,516.0 1292.5,508.8 1311.2,520.0 1323.8,527.5 1346.2,521.2 1361.2,532.5 1365.0,545.0 1377.5,555.0 1380.0,572.5 1395.0,578.8 1411.2,591.2 1416.2,616.2 1396.2,617.5 1398.8,640.0 1401.2,640.6 1394.9,665.5 1382.4,678.0 1357.4,684.3 1354.3,706.1 1341.8,709.3 1337.1,734.3 1310.6,728.0 1288.7,709.3 1269.7,709.3 1260.3,703.0 1244.7,709.3 1235.3,709.3 1222.9,696.8 1210.4,693.7 1188.5,690.5 1182.3,665.5 1188.5,656.2 1207.5,640.0 1210.0,610.0 1215.0,590.0 1238.8,585.0 1240.0,557.5 1255.0,550.0 1257.5,535.0 1270.0,527.5 1270.0,516.0" fill="#d65f47" stroke="#d65f47" stroke-width="0.8" stroke-linejoin="round"/><polygon points="1332.5,388.6 1345.0,388.6 1357.4,394.8 1388.7,391.7 1401.2,380.8 1426.1,369.8 1444.9,363.6 1469.9,354.2 1488.6,348.0 1501.1,344.9 1507.3,369.8 1519.8,394.8 1532.3,413.6 1544.8,435.4 1563.6,441.7 1576.0,454.2 1582.3,479.1 1577.7,480.0 1584.4,491.0 1588.8,506.6 1602.2,510.0 1622.0,512.0 1633.0,522.0 1641.0,524.4 1628.8,535.5 1621.0,546.6 1617.7,555.5 1597.7,552.2 1591.0,560.0 1580.0,557.7 1564.4,562.2 1546.6,564.4 1526.6,571.0 1526.6,591.0 1531.0,594.4 1524.4,602.2 1525.5,613.3 1504.4,621.0 1513.3,628.8 1518.9,640.0 1523.0,656.2 1523.0,674.9 1519.8,706.1 1488.6,706.1 1473.0,696.8 1457.4,695.2 1444.9,684.3 1426.1,687.4 1407.4,678.0 1394.9,665.5 1401.2,640.6 1398.8,640.0 1396.2,617.5 1416.2,616.2 1411.2,591.2 1395.0,578.8 1380.0,572.5 1377.5,555.0 1365.0,545.0 1361.2,532.5 1346.2,521.2 1323.8,527.5 1311.2,520.0 1292.5,508.8 1298.1,488.5 1310.6,457.3 1307.5,429.2 1323.1,419.8 1326.2,401.1 1332.5,388.6" fill="#c0302a" stroke="#c0302a" stroke-width="0.8" stroke-linejoin="round"/><polygon points="1394.9,665.5 1407.4,678.0 1426.1,687.4 1444.9,684.3 1457.4,695.2 1473.0,696.8 1488.6,706.1 1519.8,706.1 1523.0,731.1 1526.1,743.6 1513.6,762.4 1488.6,784.2 1469.9,799.8 1463.6,812.3 1435.5,818.6 1407.4,827.9 1388.7,824.8 1382.4,799.8 1376.2,787.3 1348.1,784.2 1338.7,768.6 1341.8,753.0 1332.5,746.7 1337.1,734.3 1341.8,709.3 1354.3,706.1 1357.4,684.3 1382.4,678.0 1394.9,665.5" fill="#d98065" stroke="#d98065" stroke-width="0.8" stroke-linejoin="round"/><polygon points="1641.0,524.4 1657.2,537.5 1682.2,550.0 1688.5,565.6 1685.3,581.2 1679.1,606.2 1682.2,631.2 1691.6,659.3 1707.2,690.5 1719.7,718.6 1732.2,734.3 1719.7,740.5 1725.9,768.6 1722.8,793.6 1691.6,809.2 1676.0,815.4 1660.4,799.8 1644.8,803.0 1622.9,809.2 1601.0,809.2 1582.3,799.8 1588.5,774.9 1572.9,768.6 1557.3,756.1 1551.1,740.5 1538.6,743.6 1526.1,743.6 1523.0,731.1 1519.8,706.1 1523.0,674.9 1523.0,656.2 1518.9,640.0 1513.3,628.8 1504.4,621.0 1525.5,613.3 1524.4,602.2 1531.0,594.4 1526.6,591.0 1526.6,571.0 1546.6,564.4 1564.4,562.2 1580.0,557.7 1591.0,560.0 1597.7,552.2 1617.7,555.5 1621.0,546.6 1628.8,535.5 1641.0,524.4" fill="#d98065" stroke="#d98065" stroke-width="0.8" stroke-linejoin="round"/><polygon points="1526.1,743.6 1538.6,743.6 1551.1,740.5 1557.3,756.1 1572.9,768.6 1588.5,774.9 1582.3,799.8 1601.0,809.2 1622.9,809.2 1644.8,803.0 1660.4,799.8 1676.0,815.4 1660.4,837.3 1640.0,862.5 1625.0,886.9 1613.8,905.6 1602.5,924.4 1606.2,952.5 1610.0,971.2 1617.5,999.4 1613.8,995.6 1591.2,993.8 1572.5,988.1 1553.8,976.9 1536.9,971.2 1535.0,960.0 1525.6,945.0 1506.9,937.5 1482.4,934.1 1476.1,909.1 1473.0,877.9 1463.6,856.0 1466.7,831.1 1463.6,812.3 1469.9,799.8 1488.6,784.2 1513.6,762.4 1526.1,743.6" fill="#d6a28c" stroke="#d6a28c" stroke-width="0.8" stroke-linejoin="round"/><polygon points="1348.1,784.2 1376.2,787.3 1382.4,799.8 1388.7,824.8 1407.4,827.9 1435.5,818.6 1463.6,812.3 1466.7,831.1 1463.6,856.0 1473.0,877.9 1476.1,909.1 1482.4,934.1 1457.4,940.4 1438.6,949.7 1419.9,940.4 1388.7,940.4 1376.2,952.9 1357.4,968.5 1338.7,968.5 1335.6,946.6 1316.8,934.1 1307.5,912.3 1304.4,896.6 1291.9,877.9 1274.7,862.3 1279.4,846.7 1298.1,821.7 1307.5,796.7 1348.1,784.2" fill="#d65f47" stroke="#d65f47" stroke-width="0.8" stroke-linejoin="round"/><polygon points="1337.1,734.3 1332.5,746.7 1341.8,753.0 1338.7,768.6 1348.1,784.2 1307.5,796.7 1298.1,821.7 1279.4,846.7 1274.7,862.3 1291.9,877.9 1304.4,896.6 1307.5,912.3 1289.4,922.5 1283.8,935.6 1263.1,941.2 1248.1,905.6 1229.4,896.2 1228.2,872.1 1222.7,865.5 1203.2,866.6 1197.7,862.7 1183.8,855.5 1178.8,848.0 1179.9,833.3 1192.1,827.7 1200.5,822.2 1211.6,819.4 1210.4,799.8 1213.5,781.1 1229.1,774.9 1226.0,749.9 1226.0,724.9 1235.3,709.3 1244.7,709.3 1260.3,703.0 1269.7,709.3 1288.7,709.3 1310.6,728.0 1337.1,734.3" fill="#951a1e" stroke="#951a1e" stroke-width="0.8" stroke-linejoin="round"/><polyline points="1204.1,135.0 1213.5,141.9 1232.2,154.4 1246.3,166.8 1248.5,171.5" fill="none" stroke="#d9806a" stroke-width="2" stroke-linecap="round"/><polygon points="829.4,277.7 838.7,274.6 860.6,269.9 888.7,259.0 923.1,244.9 951.2,237.1 982.4,226.2 1007.4,213.7 1023.0,201.2 1038.6,187.1 1057.3,177.1 1066.7,188.7 1069.8,210.6 1058.9,229.3 1065.1,248.0 1066.7,269.9 1079.2,279.3 1076.1,301.1 1071.4,321.4 1060.5,338.6 1035.5,346.4 1038.6,360.5 1054.2,369.8 1051.1,382.3 1038.6,388.6 1026.1,401.1 1019.9,408.9 990.2,413.6 982.4,401.1 973.0,404.2 966.8,416.7 944.9,419.8 929.3,426.0 913.7,435.4 895.0,437.0 885.6,454.2 873.1,469.8 863.7,472.9 854.4,460.4 835.6,447.9 823.1,438.5 826.2,419.8 838.7,401.1 845.0,382.3 838.7,357.3 835.6,332.4 834.1,307.4 829.4,277.7" fill="none" stroke="#eab3a0" stroke-opacity="0.35" stroke-width="1"/><polygon points="1057.3,177.1 1082.3,166.8 1094.8,154.4 1119.8,145.0 1147.9,138.7 1172.9,135.6 1180.0,133.8 1205.0,133.8 1211.2,144.0 1217.5,165.9 1225.3,184.6 1231.6,200.2 1245.6,206.5 1265.9,209.6 1289.4,208.1 1309.7,201.8 1324.7,194.3 1301.2,204.3 1288.7,219.9 1291.9,238.7 1285.6,251.2 1298.1,263.7 1313.7,276.1 1304.4,294.9 1288.7,298.0 1282.5,316.7 1290.0,326.1 1275.9,327.7 1247.8,323.0 1244.7,313.6 1226.0,310.5 1201.0,307.4 1182.3,299.6 1163.5,304.3 1147.9,319.9 1122.9,326.1 1115.1,343.3 1101.1,337.0 1079.2,335.5 1071.4,321.4 1076.1,301.1 1079.2,279.3 1066.7,269.9 1065.1,248.0 1058.9,229.3 1069.8,210.6 1066.7,188.7 1057.3,177.1" fill="none" stroke="#eab3a0" stroke-opacity="0.35" stroke-width="1"/><polygon points="1324.7,194.3 1394.9,204.3 1488.6,213.7 1551.1,210.6 1612.0,208.1 1601.0,219.9 1585.4,232.4 1594.8,244.9 1597.9,257.4 1610.4,276.1 1604.2,294.9 1591.7,307.4 1569.8,319.9 1551.1,332.4 1529.2,338.6 1501.1,344.9 1488.6,348.0 1469.9,354.2 1444.9,363.6 1426.1,369.8 1401.2,380.8 1388.7,391.7 1357.4,394.8 1345.0,388.6 1332.5,388.6 1323.1,369.8 1301.2,360.5 1282.5,344.9 1276.2,327.7 1290.0,326.1 1282.5,316.7 1288.7,298.0 1304.4,294.9 1313.7,276.1 1298.1,263.7 1285.6,251.2 1291.9,238.7 1288.7,219.9 1301.2,204.3 1324.7,194.3" fill="none" stroke="#eab3a0" stroke-opacity="0.35" stroke-width="1"/><polygon points="1612.0,208.1 1632.3,210.6 1651.0,223.1 1666.6,238.7 1676.0,260.5 1677.5,291.8 1685.3,323.0 1697.8,357.3 1710.3,391.7 1713.5,416.7 1713.5,447.9 1707.2,463.5 1676.0,488.5 1654.1,504.1 1641.0,524.4 1633.0,522.0 1622.0,512.0 1602.2,510.0 1588.8,506.6 1584.4,491.0 1577.7,480.0 1582.3,479.1 1576.0,454.2 1563.6,441.7 1544.8,435.4 1532.3,413.6 1519.8,394.8 1507.3,369.8 1501.1,344.9 1529.2,338.6 1551.1,332.4 1569.8,319.9 1591.7,307.4 1604.2,294.9 1610.4,276.1 1597.9,257.4 1594.8,244.9 1585.4,232.4 1601.0,219.9 1612.0,208.1" fill="none" stroke="#eab3a0" stroke-opacity="0.35" stroke-width="1"/><polygon points="1115.1,343.3 1122.9,326.1 1147.9,319.9 1163.5,304.3 1182.3,299.6 1201.0,307.4 1226.0,310.5 1244.7,313.6 1247.8,323.0 1275.9,327.7 1290.0,326.1 1276.2,327.7 1282.5,344.9 1301.2,360.5 1323.1,369.8 1332.5,388.6 1326.2,401.1 1323.1,419.8 1307.5,429.2 1310.6,457.3 1298.1,488.5 1292.5,508.8 1270.0,516.0 1241.6,513.5 1229.1,504.1 1210.4,491.6 1197.9,494.8 1179.1,482.3 1154.2,476.0 1138.5,463.5 1126.0,451.0 1129.2,432.3 1112.0,416.7 1110.4,385.4 1119.8,379.2 1107.3,357.3 1115.1,343.3" fill="none" stroke="#eab3a0" stroke-opacity="0.35" stroke-width="1"/><polygon points="1071.4,321.4 1079.2,335.5 1101.1,337.0 1115.1,343.3 1107.3,357.3 1119.8,379.2 1110.4,385.4 1112.0,416.7 1129.2,432.3 1126.0,451.0 1138.5,463.5 1154.2,476.0 1179.1,482.3 1197.9,494.8 1210.4,491.6 1229.1,504.1 1241.6,513.5 1270.0,516.0 1270.0,527.5 1257.5,535.0 1255.0,550.0 1240.0,557.5 1238.8,585.0 1215.0,590.0 1210.0,610.0 1207.5,640.0 1188.5,656.2 1182.3,665.5 1188.5,690.5 1172.9,693.7 1157.3,687.4 1135.4,689.0 1151.0,684.3 1151.0,668.7 1147.9,656.2 1132.3,649.9 1132.3,631.2 1119.8,621.8 1101.1,618.7 1088.6,628.1 1076.1,631.2 1057.3,618.7 1051.1,609.3 1027.7,593.7 1019.9,584.4 1004.3,578.1 991.8,565.6 987.1,550.0 979.3,526.0 979.3,494.8 973.0,466.6 988.6,460.4 988.6,432.3 990.2,413.6 1019.9,408.9 1026.1,401.1 1038.6,388.6 1051.1,382.3 1054.2,369.8 1038.6,360.5 1035.5,346.4 1060.5,338.6 1071.4,321.4" fill="none" stroke="#eab3a0" stroke-opacity="0.35" stroke-width="1"/><polygon points="990.2,413.6 988.6,432.3 988.6,460.4 973.0,466.6 979.3,494.8 979.3,526.0 987.1,550.0 991.8,565.6 1004.3,578.1 1019.9,584.4 1027.7,593.7 1023.0,604.7 1013.6,609.3 991.8,596.8 979.3,612.5 975.3,629.6 965.7,636.0 953.0,647.1 937.0,637.6 930.6,653.5 917.9,647.1 898.1,656.2 874.7,631.2 876.2,612.5 865.3,590.6 873.1,568.7 874.7,550.0 873.1,544.7 866.8,526.0 860.6,507.2 866.8,488.5 863.7,472.9 873.1,469.8 885.6,454.2 895.0,437.0 913.7,435.4 929.3,426.0 944.9,419.8 966.8,416.7 973.0,404.2 982.4,401.1 990.2,413.6" fill="none" stroke="#eab3a0" stroke-opacity="0.35" stroke-width="1"/><polygon points="898.1,656.2 917.9,647.1 930.6,653.5 937.0,637.6 953.0,647.1 965.7,636.0 975.3,629.6 979.3,612.5 991.8,596.8 1013.6,609.3 1023.0,604.7 1027.7,593.7 1051.1,609.3 1057.3,618.7 1076.1,631.2 1088.6,628.1 1101.1,618.7 1119.8,621.8 1132.3,631.2 1132.3,649.9 1147.9,656.2 1151.0,668.7 1151.0,684.3 1135.4,689.0 1132.3,706.1 1116.7,724.9 1110.4,743.6 1101.1,762.4 1088.6,774.9 1076.1,793.6 1083.8,822.6 1067.9,829.0 1055.1,840.2 1042.3,827.4 1029.6,813.1 1013.6,800.3 1010.4,789.1 1021.6,784.4 1031.2,774.8 1028.0,766.8 1013.6,760.4 1002.4,763.6 994.5,768.4 991.3,758.8 981.7,758.8 975.3,750.8 954.6,746.0 943.4,742.9 933.8,741.3 925.8,715.7 900.3,712.5 901.1,731.7 884.4,730.1 898.7,709.4 903.5,672.7 898.1,656.2" fill="none" stroke="#eab3a0" stroke-opacity="0.35" stroke-width="1"/><polygon points="1135.4,689.0 1157.3,687.4 1172.9,693.7 1188.5,690.5 1210.4,693.7 1222.9,696.8 1235.3,709.3 1226.0,724.9 1226.0,749.9 1229.1,774.9 1213.5,781.1 1210.4,799.8 1211.6,819.4 1200.5,822.2 1192.1,827.7 1179.9,833.3 1178.8,848.0 1170.0,856.6 1163.3,858.8 1153.3,850.0 1143.3,841.0 1136.6,832.2 1151.0,826.6 1151.0,812.8 1145.5,810.0 1136.6,818.3 1113.6,818.6 1091.7,803.0 1076.1,793.6 1088.6,774.9 1101.1,762.4 1110.4,743.6 1116.7,724.9 1132.3,706.1 1135.4,689.0" fill="none" stroke="#eab3a0" stroke-opacity="0.35" stroke-width="1"/><polygon points="1270.0,516.0 1292.5,508.8 1311.2,520.0 1323.8,527.5 1346.2,521.2 1361.2,532.5 1365.0,545.0 1377.5,555.0 1380.0,572.5 1395.0,578.8 1411.2,591.2 1416.2,616.2 1396.2,617.5 1398.8,640.0 1401.2,640.6 1394.9,665.5 1382.4,678.0 1357.4,684.3 1354.3,706.1 1341.8,709.3 1337.1,734.3 1310.6,728.0 1288.7,709.3 1269.7,709.3 1260.3,703.0 1244.7,709.3 1235.3,709.3 1222.9,696.8 1210.4,693.7 1188.5,690.5 1182.3,665.5 1188.5,656.2 1207.5,640.0 1210.0,610.0 1215.0,590.0 1238.8,585.0 1240.0,557.5 1255.0,550.0 1257.5,535.0 1270.0,527.5 1270.0,516.0" fill="none" stroke="#eab3a0" stroke-opacity="0.35" stroke-width="1"/><polygon points="1332.5,388.6 1345.0,388.6 1357.4,394.8 1388.7,391.7 1401.2,380.8 1426.1,369.8 1444.9,363.6 1469.9,354.2 1488.6,348.0 1501.1,344.9 1507.3,369.8 1519.8,394.8 1532.3,413.6 1544.8,435.4 1563.6,441.7 1576.0,454.2 1582.3,479.1 1577.7,480.0 1584.4,491.0 1588.8,506.6 1602.2,510.0 1622.0,512.0 1633.0,522.0 1641.0,524.4 1628.8,535.5 1621.0,546.6 1617.7,555.5 1597.7,552.2 1591.0,560.0 1580.0,557.7 1564.4,562.2 1546.6,564.4 1526.6,571.0 1526.6,591.0 1531.0,594.4 1524.4,602.2 1525.5,613.3 1504.4,621.0 1513.3,628.8 1518.9,640.0 1523.0,656.2 1523.0,674.9 1519.8,706.1 1488.6,706.1 1473.0,696.8 1457.4,695.2 1444.9,684.3 1426.1,687.4 1407.4,678.0 1394.9,665.5 1401.2,640.6 1398.8,640.0 1396.2,617.5 1416.2,616.2 1411.2,591.2 1395.0,578.8 1380.0,572.5 1377.5,555.0 1365.0,545.0 1361.2,532.5 1346.2,521.2 1323.8,527.5 1311.2,520.0 1292.5,508.8 1298.1,488.5 1310.6,457.3 1307.5,429.2 1323.1,419.8 1326.2,401.1 1332.5,388.6" fill="none" stroke="#eab3a0" stroke-opacity="0.35" stroke-width="1"/><polygon points="1394.9,665.5 1407.4,678.0 1426.1,687.4 1444.9,684.3 1457.4,695.2 1473.0,696.8 1488.6,706.1 1519.8,706.1 1523.0,731.1 1526.1,743.6 1513.6,762.4 1488.6,784.2 1469.9,799.8 1463.6,812.3 1435.5,818.6 1407.4,827.9 1388.7,824.8 1382.4,799.8 1376.2,787.3 1348.1,784.2 1338.7,768.6 1341.8,753.0 1332.5,746.7 1337.1,734.3 1341.8,709.3 1354.3,706.1 1357.4,684.3 1382.4,678.0 1394.9,665.5" fill="none" stroke="#eab3a0" stroke-opacity="0.35" stroke-width="1"/><polygon points="1641.0,524.4 1657.2,537.5 1682.2,550.0 1688.5,565.6 1685.3,581.2 1679.1,606.2 1682.2,631.2 1691.6,659.3 1707.2,690.5 1719.7,718.6 1732.2,734.3 1719.7,740.5 1725.9,768.6 1722.8,793.6 1691.6,809.2 1676.0,815.4 1660.4,799.8 1644.8,803.0 1622.9,809.2 1601.0,809.2 1582.3,799.8 1588.5,774.9 1572.9,768.6 1557.3,756.1 1551.1,740.5 1538.6,743.6 1526.1,743.6 1523.0,731.1 1519.8,706.1 1523.0,674.9 1523.0,656.2 1518.9,640.0 1513.3,628.8 1504.4,621.0 1525.5,613.3 1524.4,602.2 1531.0,594.4 1526.6,591.0 1526.6,571.0 1546.6,564.4 1564.4,562.2 1580.0,557.7 1591.0,560.0 1597.7,552.2 1617.7,555.5 1621.0,546.6 1628.8,535.5 1641.0,524.4" fill="none" stroke="#eab3a0" stroke-opacity="0.35" stroke-width="1"/><polygon points="1526.1,743.6 1538.6,743.6 1551.1,740.5 1557.3,756.1 1572.9,768.6 1588.5,774.9 1582.3,799.8 1601.0,809.2 1622.9,809.2 1644.8,803.0 1660.4,799.8 1676.0,815.4 1660.4,837.3 1640.0,862.5 1625.0,886.9 1613.8,905.6 1602.5,924.4 1606.2,952.5 1610.0,971.2 1617.5,999.4 1613.8,995.6 1591.2,993.8 1572.5,988.1 1553.8,976.9 1536.9,971.2 1535.0,960.0 1525.6,945.0 1506.9,937.5 1482.4,934.1 1476.1,909.1 1473.0,877.9 1463.6,856.0 1466.7,831.1 1463.6,812.3 1469.9,799.8 1488.6,784.2 1513.6,762.4 1526.1,743.6" fill="none" stroke="#eab3a0" stroke-opacity="0.35" stroke-width="1"/><polygon points="1348.1,784.2 1376.2,787.3 1382.4,799.8 1388.7,824.8 1407.4,827.9 1435.5,818.6 1463.6,812.3 1466.7,831.1 1463.6,856.0 1473.0,877.9 1476.1,909.1 1482.4,934.1 1457.4,940.4 1438.6,949.7 1419.9,940.4 1388.7,940.4 1376.2,952.9 1357.4,968.5 1338.7,968.5 1335.6,946.6 1316.8,934.1 1307.5,912.3 1304.4,896.6 1291.9,877.9 1274.7,862.3 1279.4,846.7 1298.1,821.7 1307.5,796.7 1348.1,784.2" fill="none" stroke="#eab3a0" stroke-opacity="0.35" stroke-width="1"/><polygon points="1337.1,734.3 1332.5,746.7 1341.8,753.0 1338.7,768.6 1348.1,784.2 1307.5,796.7 1298.1,821.7 1279.4,846.7 1274.7,862.3 1291.9,877.9 1304.4,896.6 1307.5,912.3 1289.4,922.5 1283.8,935.6 1263.1,941.2 1248.1,905.6 1229.4,896.2 1228.2,872.1 1222.7,865.5 1203.2,866.6 1197.7,862.7 1183.8,855.5 1178.8,848.0 1179.9,833.3 1192.1,827.7 1200.5,822.2 1211.6,819.4 1210.4,799.8 1213.5,781.1 1229.1,774.9 1226.0,749.9 1226.0,724.9 1235.3,709.3 1244.7,709.3 1260.3,703.0 1269.7,709.3 1288.7,709.3 1310.6,728.0 1337.1,734.3" fill="none" stroke="#eab3a0" stroke-opacity="0.35" stroke-width="1"/><circle cx="754.9" cy="490" r="18.7" fill="#8c1e1e" stroke="#c66" stroke-opacity="0.7" stroke-width="1"/><circle cx="736.9" cy="698" r="18.7" fill="#8c1e1e" stroke="#c66" stroke-opacity="0.7" stroke-width="1"/><circle cx="944.1" cy="881.6" r="18.7" fill="#8c1e1e" stroke="#c66" stroke-opacity="0.7" stroke-width="1"/><circle cx="1459.6" cy="150.4" r="11.5" fill="#b0201f" stroke="#e6a0a0" stroke-opacity="0.8" stroke-width="1"/><circle cx="1708.9" cy="80.9" r="11.8" fill="#b0201f" stroke="#e6a0a0" stroke-opacity="0.8" stroke-width="1"/><circle cx="1720.9" cy="878.2" r="11.5" fill="#b0201f" stroke="#e6a0a0" stroke-opacity="0.8" stroke-width="1"/><circle cx="1327.5" cy="1041.4" r="11.5" fill="#b0201f" stroke="#e6a0a0" stroke-opacity="0.8" stroke-width="1"/><circle cx="1563" cy="1048.4" r="11.5" fill="#b0201f" stroke="#e6a0a0" stroke-opacity="0.8" stroke-width="1"/><circle cx="1784.2" cy="1007" r="11.5" fill="#b0201f" stroke="#e6a0a0" stroke-opacity="0.8" stroke-width="1"/><circle cx="1840.6" cy="749" r="8" fill="#b0201f" stroke="#e6a0a0" stroke-opacity="0.8" stroke-width="1"/><g font-style="italic"><text x="907.6" y="172.6" text-anchor="middle" font-family="Liberation Sans" font-size="12" fill="#4d5256" font-weight="bold" letter-spacing="2.2">Baltic</text><text x="907.6" y="190.5" text-anchor="middle" font-family="Liberation Sans" font-size="12" fill="#4d5256" font-weight="bold" letter-spacing="2.2">Sea</text></g><text x="1710.7" y="53.6" text-anchor="middle" font-family="Liberation Sans" font-size="10" fill="#5e5e5e" font-weight="bold" letter-spacing="5.5">LITHUANIA</text><text x="1563" y="70.8" text-anchor="middle" font-family="Liberation Sans" font-size="10" fill="#777">Taurage</text><text x="1660" y="180.4" text-anchor="middle" font-family="Liberation Sans" font-size="10" fill="#777">Marijampole</text><text x="1724" y="205.3" text-anchor="middle" font-family="Liberation Sans" font-size="10" fill="#777">Alytus</text><text x="1695" y="556.0" text-anchor="middle" font-family="Liberation Sans" font-size="10" fill="#777">Brest</text><text x="1469.7" y="1038.8" text-anchor="middle" font-family="Liberation Sans" font-size="10" fill="#777">Kosice</text><text x="1468.2" y="999.9" text-anchor="middle" font-family="Liberation Sans" font-size="10" fill="#777">Presov</text><text x="1176.6" y="1013.9" text-anchor="middle" font-family="Liberation Sans" font-size="10" fill="#777">Trencin</text><text x="1241.9" y="968.8" text-anchor="middle" font-family="Liberation Sans" font-size="10" fill="#777">Zilina</text><text x="1143.2" y="968.8" text-anchor="middle" font-family="Liberation Sans" font-size="10" fill="#777">Zlin</text><text x="1104.3" y="916.6" text-anchor="middle" font-family="Liberation Sans" font-size="10" fill="#777">Olomouc</text><text x="954.2" y="943.9" text-anchor="middle" font-family="Liberation Sans" font-size="10" fill="#777">Jihlava</text><text x="970.6" y="853.6" text-anchor="middle" font-family="Liberation Sans" font-size="10" fill="#777">Pardubice</text><text x="973.7" y="823.4" text-anchor="middle" font-family="Liberation Sans" font-size="10" fill="#777">Hradec</text><text x="973.7" y="835.1" text-anchor="middle" font-family="Liberation Sans" font-size="10" fill="#777">Kralove</text><text x="752.9" y="894.9" text-anchor="middle" font-family="Liberation Sans" font-size="10" fill="#777">Pilsen</text><text x="905.3" y="748.8" text-anchor="middle" font-family="Liberation Sans" font-size="10" fill="#777">Liberec</text><text x="812.7" y="758.9" text-anchor="middle" font-family="Liberation Sans" font-size="10" fill="#777">Usti nad</text><text x="812.7" y="770.6" text-anchor="middle" font-family="Liberation Sans" font-size="10" fill="#777">Labem</text><text x="840" y="604.9" text-anchor="middle" font-family="Liberation Sans" font-size="10" fill="#777">Cottbus</text><text x="853.2" y="1002.2" text-anchor="middle" font-family="Liberation Sans" font-size="10" fill="#777">Budweis</text><text x="834.5" y="1094.8" text-anchor="middle" font-family="Liberation Sans" font-size="10" fill="#777">Linz</text><text x="956.6" y="1108.6" text-anchor="middle" font-family="Liberation Sans" font-size="10" fill="#777">St Polten</text><text x="1135.4" y="1084.6" text-anchor="middle" font-family="Liberation Sans" font-size="10" fill="#777">Trnava</text><text x="1181" y="1094.0" text-anchor="middle" font-family="Liberation Sans" font-size="10" fill="#777">Nitra</text><text x="721.8" y="739.5" text-anchor="middle" font-family="Liberation Sans" font-size="10" fill="#777">mnitz</text><text x="717" y="826.6" text-anchor="middle" font-family="Liberation Sans" font-size="10" fill="#777">bad</text><text x="726" y="510.1" text-anchor="middle" font-family="Liberation Sans" font-size="10" fill="#777">otsdam</text><text x="1276.9" y="1031.0" text-anchor="middle" font-family="Liberation Sans" font-size="10" fill="#777">Banska</text><text x="1276.9" y="1042.6" text-anchor="middle" font-family="Liberation Sans" font-size="10" fill="#777">Bystrica</text><text x="1710.7" y="127.3" text-anchor="middle" font-family="Liberation Sans" font-size="11.5" fill="#8e8e8e" font-weight="bold">Kaunas</text><text x="1401.3" y="156.8" text-anchor="middle" font-family="Liberation Sans" font-size="11.5" fill="#8e8e8e" font-weight="bold">Kaliningrad</text><text x="1703" y="319.3" text-anchor="middle" font-family="Liberation Sans" font-size="11.5" fill="#8e8e8e" font-weight="bold">Hronda</text><text x="785.5" y="708.8" text-anchor="middle" font-family="Liberation Sans" font-size="11.5" fill="#8e8e8e" font-weight="bold">Dresden</text><text x="847.7" y="848.0" text-anchor="middle" font-family="Liberation Sans" font-size="11.5" fill="#8e8e8e" font-weight="bold">Prague</text><text x="1199.1" y="882.2" text-anchor="middle" font-family="Liberation Sans" font-size="11.5" fill="#8e8e8e" font-weight="bold">Ostrava</text><text x="1046" y="971.6" text-anchor="middle" font-family="Liberation Sans" font-size="11.5" fill="#8e8e8e" font-weight="bold">Brno</text><text x="1025" y="1109.1" text-anchor="middle" font-family="Liberation Sans" font-size="11.5" fill="#8e8e8e" font-weight="bold">Vienna</text><text x="1092.6" y="1117.1" text-anchor="middle" font-family="Liberation Sans" font-size="11.5" fill="#8e8e8e" font-weight="bold">Bratislava</text><text x="1829" y="159.1" text-anchor="middle" font-family="Liberation Sans" font-size="11.5" fill="#8e8e8e" font-weight="bold">Vilni</text><text x="1485" y="157.1" text-anchor="middle" font-family="Liberation Sans" font-size="10" fill="#5a5a5a" font-weight="bold" letter-spacing="3">RUSSIA</text><text x="964.3" y="914.4" text-anchor="middle" font-family="Liberation Sans" font-size="10" fill="#5a5a5a" font-weight="bold" letter-spacing="3">CZECHIA</text><text x="801" y="504.6" text-anchor="middle" font-family="Liberation Sans" font-size="10" fill="#5a5a5a" font-weight="bold" letter-spacing="3">BRANDENBURG</text><text x="723" y="302.6" text-anchor="middle" font-family="Liberation Sans" font-size="10" fill="#5a5a5a" font-weight="bold" letter-spacing="3">STERN</text><text x="1808" y="302.2" text-anchor="middle" font-family="Liberation Sans" font-size="9" fill="#4f4f4f" font-weight="bold" letter-spacing="1.5">HRODZYENSKAYA</text><text x="1808" y="313.8" text-anchor="middle" font-family="Liberation Sans" font-size="9" fill="#4f4f4f" font-weight="bold" letter-spacing="1.5">VOBLAST</text><text x="1797.8" y="680.7" text-anchor="middle" font-family="Liberation Sans" font-size="9" fill="#4f4f4f" font-weight="bold" letter-spacing="1.5">VOLYN</text><text x="1797.8" y="693.2" text-anchor="middle" font-family="Liberation Sans" font-size="9" fill="#4f4f4f" font-weight="bold" letter-spacing="1.5">OBLAST</text><text x="1780.7" y="1034.2" text-anchor="middle" font-family="Liberation Sans" font-size="9" fill="#4f4f4f" font-weight="bold" letter-spacing="1.5">IVANO-FRANKIVSK</text><text x="1780.7" y="1046.2" text-anchor="middle" font-family="Liberation Sans" font-size="9" fill="#4f4f4f" font-weight="bold" letter-spacing="1.5">OBLAST</text><text x="1652.4" y="1075.7" text-anchor="middle" font-family="Liberation Sans" font-size="9" fill="#4f4f4f" font-weight="bold" letter-spacing="1.5">ZAKARPATTIA</text><text x="1652.4" y="1087.2" text-anchor="middle" font-family="Liberation Sans" font-size="9" fill="#4f4f4f" font-weight="bold" letter-spacing="1.5">OBLAST</text><text x="805" y="1111.2" text-anchor="middle" font-family="Liberation Sans" font-size="9" fill="#4f4f4f" font-weight="bold" letter-spacing="1.5">UPPER</text><text x="752.9" y="493.4" text-anchor="middle" font-family="Liberation Sans" font-size="11" fill="#c77" font-weight="bold">Berlin</text><text x="1720.9" y="881.2" text-anchor="middle" font-family="Liberation Sans" font-size="9" fill="#c77">Lviv</text><text x="1563" y="1051.6" text-anchor="middle" font-family="Liberation Sans" font-size="9" fill="#777">Uzhhorod</text><text x="1784.6" y="1009.7" text-anchor="middle" font-family="Liberation Sans" font-size="9" fill="#777">Ivano-Frankivsk</text><text x="948" y="332.7" text-anchor="middle" font-family="Liberation Sans" font-weight="bold" font-size="16" fill="#fff" stroke="#000" stroke-width="2.6" paint-order="stroke" stroke-linejoin="round">548</text><text x="1175" y="244.8" text-anchor="middle" font-family="Liberation Sans" font-weight="bold" font-size="16" fill="#fff" stroke="#000" stroke-width="2.6" paint-order="stroke" stroke-linejoin="round">559</text><text x="1459.6" y="291.5" text-anchor="middle" font-family="Liberation Sans" font-weight="bold" font-size="16" fill="#fff" stroke="#000" stroke-width="2.6" paint-order="stroke" stroke-linejoin="round">179</text><text x="1603.4" y="381.7" text-anchor="middle" font-family="Liberation Sans" font-weight="bold" font-size="16" fill="#fff" stroke="#000" stroke-width="2.6" paint-order="stroke" stroke-linejoin="round">468</text><text x="1217.8" y="410.4" text-anchor="middle" font-family="Liberation Sans" font-weight="bold" font-size="16" fill="#fff" stroke="#000" stroke-width="2.6" paint-order="stroke" stroke-linejoin="round">594</text><text x="925.5" y="542.6" text-anchor="middle" font-family="Liberation Sans" font-weight="bold" font-size="16" fill="#fff" stroke="#000" stroke-width="2.6" paint-order="stroke" stroke-linejoin="round">121</text><text x="1110.5" y="521.6" text-anchor="middle" font-family="Liberation Sans" font-weight="bold" font-size="16" fill="#fff" stroke="#000" stroke-width="2.6" paint-order="stroke" stroke-linejoin="round">2206</text><text x="1459.6" y="520.1" text-anchor="middle" font-family="Liberation Sans" font-weight="bold" font-size="16" fill="#fff" stroke="#000" stroke-width="2.6" paint-order="stroke" stroke-linejoin="round">3660</text><text x="1301" y="629.7" text-anchor="middle" font-family="Liberation Sans" font-weight="bold" font-size="16" fill="#fff" stroke="#000" stroke-width="2.6" paint-order="stroke" stroke-linejoin="round">1613</text><text x="1607.3" y="685.7" text-anchor="middle" font-family="Liberation Sans" font-weight="bold" font-size="16" fill="#fff" stroke="#000" stroke-width="2.6" paint-order="stroke" stroke-linejoin="round">503</text><text x="1015.7" y="704.3" text-anchor="middle" font-family="Liberation Sans" font-weight="bold" font-size="16" fill="#fff" stroke="#000" stroke-width="2.6" paint-order="stroke" stroke-linejoin="round">2642</text><text x="1161.8" y="768.8" text-anchor="middle" font-family="Liberation Sans" font-weight="bold" font-size="16" fill="#fff" stroke="#000" stroke-width="2.6" paint-order="stroke" stroke-linejoin="round">682</text><text x="1428.5" y="752.5" text-anchor="middle" font-family="Liberation Sans" font-weight="bold" font-size="16" fill="#fff" stroke="#000" stroke-width="2.6" paint-order="stroke" stroke-linejoin="round">498</text><text x="1258.2" y="814.0" text-anchor="middle" font-family="Liberation Sans" font-weight="bold" font-size="16" fill="#fff" stroke="#000" stroke-width="2.6" paint-order="stroke" stroke-linejoin="round">8635</text><text x="1378.7" y="880.8" text-anchor="middle" font-family="Liberation Sans" font-weight="bold" font-size="16" fill="#fff" stroke="#000" stroke-width="2.6" paint-order="stroke" stroke-linejoin="round">1249</text><text x="1550.6" y="867.6" text-anchor="middle" font-family="Liberation Sans" font-weight="bold" font-size="16" fill="#fff" stroke="#000" stroke-width="2.6" paint-order="stroke" stroke-linejoin="round">388</text></svg><div class="abs" style="left:1094px;top:10px;width:34px;height:30px;background:#3b3b3b;border:1px solid #444"></div><svg class="abs" style="left:1100px;top:15px" width="22" height="22"><g fill="#ddd"><rect x="3" y="2.5" width="3.2" height="3.2"/><rect x="3" y="6.5" width="3.2" height="3.2" fill="#aaa"/><rect x="3" y="10.5" width="3.2" height="3.2"/><path d="M2.8 17.5 L4.6 14.3 L6.4 17.5 Z"/></g><g stroke="#ddd" stroke-width="1.3"><line x1="8" y1="4.1" x2="17" y2="4.1"/><line x1="8" y1="8.1" x2="17" y2="8.1"/><line x1="8" y1="12.1" x2="17" y2="12.1"/><line x1="8" y1="16.1" x2="17" y2="16.1"/></g></svg><div class="abs" style="left:1097px;top:995px;width:29px;height:56px;background:#333;border:1px solid #3f3f3f"></div><svg class="abs" style="left:1097px;top:995px" width="30" height="58"><g stroke="#d0d0d0" stroke-width="1.6"><line x1="8.7" y1="13.8" x2="20.7" y2="13.8"/><line x1="14.7" y1="7.8" x2="14.7" y2="19.8"/><line x1="8.7" y1="40.7" x2="20.7" y2="40.7"/></g></svg><div class="abs" style="left:647px;top:1057px;width:477px;height:15px;background:rgba(225,225,225,0.85);color:#333;font-size:12px;line-height:15px;padding-left:4px;white-space:nowrap">Esri, HERE, Garmin, FAO, NOAA, USGS | Esri, HERE, Garmin, FAO, NOAA, USGS</div></div><svg class="abs" style="left:1832px;top:39px" width="20" height="20"><circle cx="10" cy="9.5" r="8.3" fill="#2e2e2e" stroke="#bbb" stroke-width="1.1"/><g stroke="#bbb" stroke-width="1" fill="none"><path d="M6.2 5.7 L8.6 8.1 M6.2 5.7 h2 M6.2 5.7 v2"/><path d="M13.8 5.7 L11.4 8.1 M13.8 5.7 h-2 M13.8 5.7 v2"/><path d="M6.2 13.3 L8.6 10.9 M6.2 13.3 h2 M6.2 13.3 v-2"/><path d="M13.8 13.3 L11.4 10.9 M13.8 13.3 h-2 M13.8 13.3 v-2"/></g></svg>
<div class="abs" style="left:721px;top:1121px;width:159px;height:28px;background:#222;border-bottom:3px solid #2f7fd8"></div>
<div class="t" style="left:721px;width:159px;text-align:center;top:1128px;font-size:13px;color:#d0d0d0">Przypadki potwierdzone</div>
<div class="abs" style="left:885px;top:1121px;width:284px;height:27px;background:#000;border:1px solid #333;border-top:none"></div>
<div class="t" style="left:885px;width:284px;text-align:center;top:1128px;font-size:13px;color:#d0d0d0">Przypadki potwierdzone na 100k mieszkańców</div>
<div class="panel" style="left:708px;top:1161px;width:1134px;height:290px"></div>
<div class="t" style="left:714px;top:1169px;font-size:14px;color:#d8d8d8;font-weight:bold;text-decoration:underline">Źródła danych</div>
<div class="t" style="left:714px;top:1203px;font-size:14px;color:#d2d2d2">Liczba zachorowań i zgonów dla Polski: <i style="color:#2e86e0">Ministerstwo Zdrowia</i></div>
<div class="t" style="left:714px;top:1220px;font-size:14px;color:#d2d2d2">Dane o zachorowaniach: <i>na podst.:</i> <i style="color:#2e86e0">Johns Hopkins CSSE</i></div>
<div class="t" style="left:714px;top:1237px;font-size:14px;color:#d2d2d2">Dane o populacji: <i style="color:#2e86e0">GUS</i></div>
<div class="abs" style="left:714px;top:1270px;width:126px;height:17px;background:#cfdcea"></div>
<div class="t" style="left:714px;top:1271px;font-size:14px;color:#3a8ae0">WERSJA MOBILNA</div>
<div class="t" style="left:1640px;width:180px;text-align:center;top:1171px;font-size:14px;color:#d2d2d2">Aktualizacja</div>
<div class="t" style="left:1640px;width:180px;text-align:center;top:1200px;font-size:14px;color:#d2d2d2">6/3/2020, 10:10 AM</div>
</body></html>
